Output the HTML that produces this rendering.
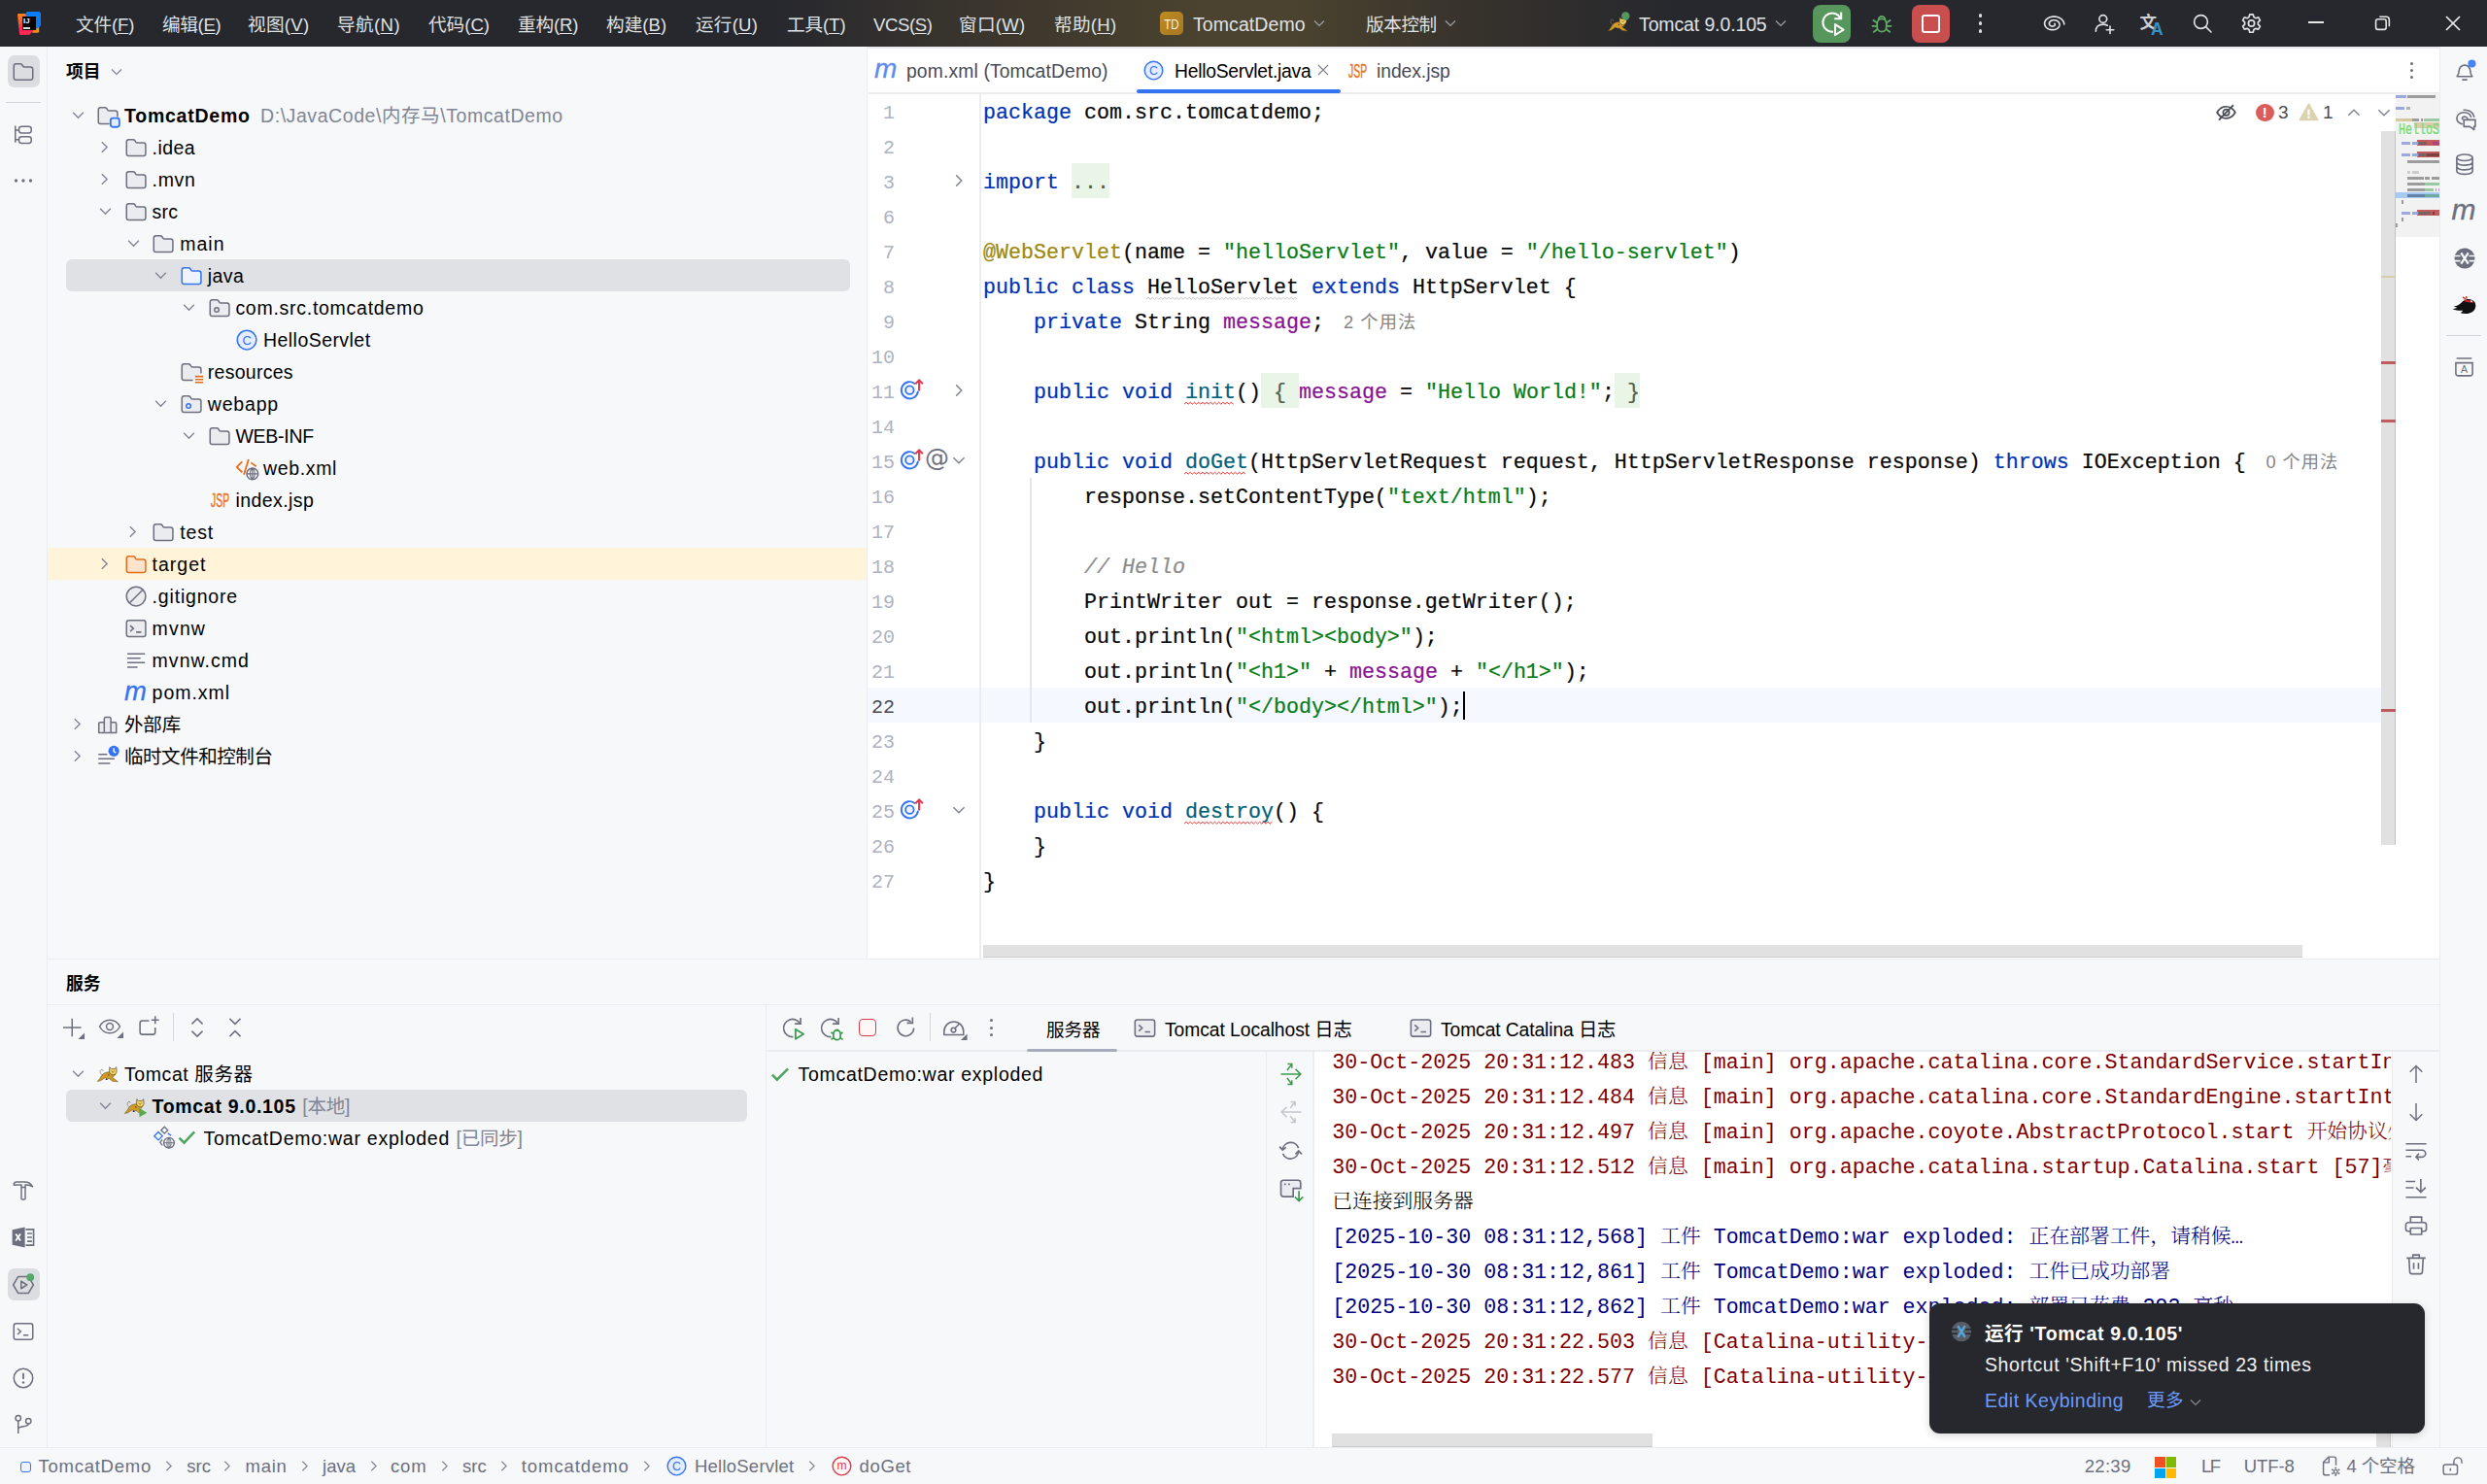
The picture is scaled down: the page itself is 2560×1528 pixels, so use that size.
<!DOCTYPE html><html lang="zh-CN"><head><meta charset="utf-8"><title>TomcatDemo – HelloServlet.java</title><style>
html,body{margin:0;padding:0}
body{width:2560px;height:1528px;overflow:hidden;position:relative;background:#F7F8FA;font-family:"Liberation Sans","Noto Sans CJK SC",sans-serif;font-size:19.5px;color:#000}
.a{position:absolute}
svg{overflow:visible}
.t{position:absolute;white-space:nowrap}
.m{position:absolute;white-space:pre;font-family:"Liberation Mono","Noto Sans CJK SC",monospace;font-size:21.667px}
.c{position:absolute;white-space:pre;font-family:"Liberation Mono","Noto Serif CJK SC",monospace;font-size:21.667px}
.cj{font-size:20.8px;font-weight:300}
.g{color:#818594}
.k{color:#0033B3}.s{color:#067D17}.f{color:#871094}.an{color:#9E880D}.cm{color:#8C8C8C;font-style:italic}.fn{color:#00627A}
.mc{-webkit-text-stroke:0.22px currentColor}
.err{}
.wk{}
.hint{font-family:"Liberation Sans","Noto Sans CJK SC",sans-serif;font-size:18.300px;color:#858585}
u{text-underline-offset:2px}
</style></head><body>
<div class="a" style="left:0px;top:0px;width:2560px;height:48px;background:#27282E;background:linear-gradient(90deg,#27282E 0px,#27282E 800px,#3a352d 1000px,#4b432f 1240px,#4b432f 1330px,#36322c 1520px,#27282E 1720px,#27282E 2560px);"></div>
<div class="a" style="left:0px;top:48px;width:48px;height:1442px;background:#F7F8FA;border-right:1px solid #EBECF0;"></div>
<div class="a" style="left:2511px;top:48px;width:49px;height:1442px;background:#F7F8FA;border-left:1px solid #EBECF0;box-sizing:border-box;"></div>
<div class="a" style="left:49px;top:48px;width:844px;height:939px;background:#F7F8FA;"></div>
<div class="a" style="left:892px;top:48px;width:2px;height:939px;background:#ECEDF1;"></div>
<div class="a" style="left:893px;top:48px;width:1618px;height:939px;background:#FFFFFF;"></div>
<div class="a" style="left:894px;top:95.4px;width:1617px;height:1.6px;background:#EBECF0;"></div>
<div class="a" style="left:49px;top:987px;width:2462px;height:1px;background:#EBECF0;"></div>
<div class="a" style="left:49px;top:1034px;width:2462px;height:1px;background:#EBECF0;"></div>
<div class="a" style="left:0px;top:1490px;width:2560px;height:1px;background:#EBECF0;"></div>
<div class="a" style="left:17px;top:11px;width:27px;height:27px;background:linear-gradient(172deg,#FF8A15 8%,#FD5A34 40%,#FE2857 62%,#FE2857 100%);clip-path:polygon(1.0px 4.0px,1.8px 3.1px,9.0px 3.0px,20.0px 17.0px,13.5px 24.8px,4.0px 25.0px,3.0px 24.2px);"></div>
<div class="a" style="left:17px;top:11px;width:27px;height:27px;background:#FF8A15;clip-path:polygon(16.0px 22.7px,22.3px 22.7px,23.2px 21.8px,23.2px 16.0px,19.0px 16.0px);"></div>
<div class="a" style="left:17px;top:11px;width:27px;height:27px;background:linear-gradient(200deg,#087CFA 55%,#4A6FE0 100%);clip-path:polygon(9.6px 2.6px,11.2px 1.0px,23.4px 1.0px,25.0px 2.6px,25.0px 15.3px,20.4px 18.9px,9.6px 18.9px);"></div>
<div class="a" style="left:23px;top:17px;width:14px;height:14px;background:#000;"></div>
<div class="t" style="left:24px;top:16.5px;height:10px;line-height:10px;color:#fff;font-size:7.800px;font-weight:bold;letter-spacing:0.200px;">IJ</div>
<div class="a" style="left:24px;top:28.3px;width:6.5px;height:1.6px;background:#DADADA;"></div>
<div class="t" style="left:78px;top:6.0px;height:40px;line-height:40px;color:#DFE1E5;font-size:18.6px;letter-spacing:-0.111px;">文件(<u>F</u>)</div>
<div class="t" style="left:167px;top:6.0px;height:40px;line-height:40px;color:#DFE1E5;font-size:18.6px;letter-spacing:-0.320px;">编辑(<u>E</u>)</div>
<div class="t" style="left:255px;top:6.0px;height:40px;line-height:40px;color:#DFE1E5;font-size:18.6px;letter-spacing:0.300px;">视图(<u>V</u>)</div>
<div class="t" style="left:347px;top:6.0px;height:40px;line-height:40px;color:#DFE1E5;font-size:18.6px;letter-spacing:0.394px;">导航(<u>N</u>)</div>
<div class="t" style="left:441px;top:6.0px;height:40px;line-height:40px;color:#DFE1E5;font-size:18.6px;letter-spacing:-0.006px;">代码(<u>C</u>)</div>
<div class="t" style="left:533px;top:6.0px;height:40px;line-height:40px;color:#DFE1E5;font-size:18.6px;letter-spacing:-0.126px;">重构(<u>R</u>)</div>
<div class="t" style="left:624px;top:6.0px;height:40px;line-height:40px;color:#DFE1E5;font-size:18.6px;letter-spacing:0.040px;">构建(<u>B</u>)</div>
<div class="t" style="left:716px;top:6.0px;height:40px;line-height:40px;color:#DFE1E5;font-size:18.6px;letter-spacing:0.234px;">运行(<u>U</u>)</div>
<div class="t" style="left:810px;top:6.0px;height:40px;line-height:40px;color:#DFE1E5;font-size:18.6px;letter-spacing:-0.071px;">工具(<u>T</u>)</div>
<div class="t" style="left:899px;top:6.0px;height:40px;line-height:40px;color:#DFE1E5;font-size:18.6px;letter-spacing:-0.441px;">VCS(<u>S</u>)</div>
<div class="t" style="left:987px;top:6.0px;height:40px;line-height:40px;color:#DFE1E5;font-size:18.6px;letter-spacing:0.289px;">窗口(<u>W</u>)</div>
<div class="t" style="left:1085px;top:6.0px;height:40px;line-height:40px;color:#DFE1E5;font-size:18.6px;letter-spacing:0.294px;">帮助(<u>H</u>)</div>
<div class="a" style="left:1194px;top:12px;width:24px;height:24px;background:#B8862B;border-radius:5px;background:linear-gradient(135deg,#C08A22,#A87822);"></div>
<div class="t" style="left:1194px;top:4.5px;height:40px;line-height:40px;width:24px;text-align:center;color:#FBF1DC;font-size:14px;transform:scaleX(0.82);">TD</div>
<div class="t" style="left:1228px;top:4.5px;height:40px;line-height:40px;color:#DFE1E5;letter-spacing:0.083px;">TomcatDemo</div>
<svg class="a" style="left:1350px;top:16px" width="16" height="16" viewBox="0 0 16 16" fill="none" ><path d="M3 5.5L8 10.5 13 5.5" stroke="#9DA0A8" stroke-width="1.2"/></svg>
<div class="t" style="left:1406px;top:6.0px;height:40px;line-height:40px;color:#DFE1E5;font-size:18.6px;letter-spacing:-0.398px;">版本控制</div>
<svg class="a" style="left:1485px;top:16px" width="16" height="16" viewBox="0 0 16 16" fill="none" ><path d="M3 5.5L8 10.5 13 5.5" stroke="#9DA0A8" stroke-width="1.2"/></svg>
<svg class="a" style="left:1654.5px;top:16.5px" width="21" height="16.0" viewBox="0 0 21 16" fill="none" ><path d="M4.600 8.200C2.600 7 2.200 3.600 4.400 3.200c1.300-.200 1.700 1.100.900 1.600" stroke="#777" stroke-width="0.700" fill="none"/><path d="M0.300 14.700c1.600-1.400 2.700-3.300 3.900-5.300C5.600 7 8.600 5.300 12 5.600l6 1.200c-.200 1.900-1.500 3.300-3.200 4l5.600 4.200-5.300-.400-3.400-2.700c-1.300.600-2.900.300-3.900-.700-1.500.700-2.700 2-4.500 3z" fill="#D09A2B" stroke="#5E4A17" stroke-width="0.500" stroke-linejoin="round"/><path d="M12.200 0.700l1.700 1.700h3.200l1.800-1.700.300 4.300c-.100 2.300-2.100 3.400-3.700 3.400s-3.400-1.100-3.500-3.400z" fill="#F2D264" stroke="#4A3D17" stroke-width="0.600" stroke-linejoin="round"/><path d="M14.300 4.300l1.200 1.800 1.200-1.800" stroke="#4A3D17" stroke-width="0.500" fill="none"/><path d="M8.800 11.600l1.800 1.500-2.400.300zM10.800 7.700l1.400.800-1.200.700z" fill="#1E1E1E"/><circle cx="18.300" cy="-0.500" r="4.200" fill="#57965C"/></svg>
<div class="t" style="left:1687px;top:4.5px;height:40px;line-height:40px;color:#DFE1E5;letter-spacing:-0.125px;">Tomcat 9.0.105</div>
<svg class="a" style="left:1825px;top:16px" width="16" height="16" viewBox="0 0 16 16" fill="none" ><path d="M3 5.5L8 10.5 13 5.5" stroke="#9DA0A8" stroke-width="1.2"/></svg>
<div class="a" style="left:1866px;top:5px;width:39px;height:39px;background:#57965C;border-radius:8px;"></div>
<svg class="a" style="left:1870.5px;top:8.5px" width="30" height="30" viewBox="0 0 16 16" fill="none" ><path d="M8.5 12.6A5.1 5.1 0 1 1 12.4 5" stroke="#fff" stroke-width="1.1"/><path d="M12.9 1.8v3.7H9.2" stroke="#fff" stroke-width="1.1"/><path d="M9.6 8.6l4.6 2.9-4.6 2.9z" stroke="#fff" stroke-width="1.1" stroke-linejoin="round"/></svg>
<svg class="a" style="left:1924.5px;top:12px" width="24" height="24" viewBox="0 0 24 24" fill="none" ><path d="M7.200 12.200a4.800 4.800 0 0 1 9.600 0v3.600a4.800 4.800 0 0 1-9.600 0z" stroke="#5FAD65" stroke-width="1.800"/><path d="M8.600 8.200a3.400 3.400 0 0 1 6.800 0" stroke="#5FAD65" stroke-width="1.800"/><path d="M7.200 11.600L2.800 8.600M16.800 11.600l4.400-3M7.200 14.800H1.800M16.800 14.800h5.400M7.600 18L3.200 21.200M16.400 18l4.400 3.200" stroke="#5FAD65" stroke-width="1.800"/></svg>
<div class="a" style="left:1968px;top:5px;width:39px;height:39px;background:#C94F4F;border-radius:8px;"></div>
<div class="a" style="left:1978px;top:15px;width:19px;height:19px;border:2px solid #fff;border-radius:3px;box-sizing:border-box;"></div>
<div class="a" style="left:2036.5px;top:14.2px;width:3.6px;height:3.6px;background:#DFE1E5;border-radius:50%;"></div>
<div class="a" style="left:2036.5px;top:22.2px;width:3.6px;height:3.6px;background:#DFE1E5;border-radius:50%;"></div>
<div class="a" style="left:2036.5px;top:30.2px;width:3.6px;height:3.6px;background:#DFE1E5;border-radius:50%;"></div>
<svg class="a" style="left:2101.5px;top:12.5px" width="23" height="23" viewBox="0 0 16 16" fill="none" ><path d="M8.96 7.97 L9.03 8.03 L9.10 8.10 L9.15 8.18 L9.20 8.26 L9.24 8.35 L9.26 8.45 L9.27 8.55 L9.27 8.65 L9.25 8.76 L9.22 8.87 L9.17 8.98 L9.11 9.08 L9.03 9.18 L8.93 9.28 L8.82 9.38 L8.69 9.47 L8.55 9.55 L8.40 9.62 L8.24 9.67 L8.06 9.72 L7.88 9.76 L7.68 9.78 L7.48 9.79 L7.28 9.78 L7.07 9.76 L6.87 9.72 L6.66 9.66 L6.46 9.59 L6.27 9.50 L6.08 9.40 L5.90 9.28 L5.74 9.14 L5.59 8.99 L5.46 8.83 L5.35 8.66 L5.26 8.47 L5.19 8.28 L5.14 8.08 L5.12 7.87 L5.12 7.66 L5.15 7.45 L5.21 7.24 L5.30 7.03 L5.41 6.82 L5.55 6.62 L5.71 6.42 L5.90 6.24 L6.12 6.07 L6.36 5.91 L6.62 5.77 L6.90 5.65 L7.20 5.55 L7.51 5.47 L7.84 5.41 L8.18 5.37 L8.52 5.36 L8.87 5.37 L9.22 5.41 L9.57 5.47 L9.91 5.56 L10.25 5.67 L10.57 5.81 L10.88 5.98 L11.17 6.17 L11.44 6.38 L11.69 6.61 L11.91 6.86 L12.10 7.13 L12.26 7.42 L12.38 7.72 L12.47 8.03 L12.52 8.34 L12.53 8.67 L12.50 8.99 L12.44 9.32 L12.33 9.64 L12.18 9.96 L11.99 10.27 L11.77 10.56 L11.50 10.84 L11.20 11.11 L10.87 11.35 L10.50 11.58 L10.11 11.77 L9.69 11.94 L9.25 12.08 L8.78 12.19 L8.31 12.26 L7.82 12.31 L7.32 12.31 L6.82 12.28 L6.32 12.22 L5.83 12.12 L5.35 11.98 L4.88 11.81 L4.43 11.60 L4.00 11.36 L3.60 11.09 L3.24 10.79 L2.90 10.46 L2.61 10.11 L2.36 9.73 L2.15 9.34 L1.99 8.93 L1.88 8.50 L1.82 8.07 L1.81 7.63 L1.86 7.19 L1.96 6.75 L2.12 6.31 L2.32 5.89 L2.58 5.48 L2.89 5.08 L3.25 4.71 L3.66 4.36 L4.11 4.04 L4.60 3.75 L5.12 3.50 L5.68 3.28 L6.27 3.10 L6.88 2.96 L7.51 2.87 L8.15 2.82 L8.80 2.81 L9.45 2.86 L10.09 2.95 L10.73 3.08 L11.36 3.26 L11.96 3.49 L12.54 3.76 L13.08 4.07 L13.59 4.42 L14.06 4.81 L14.48 5.23 L14.85 5.68 L15.17 6.17 L15.43 6.67 L15.63 7.20 L15.77 7.73 L15.84 8.29" stroke="#DFE1E5" stroke-width="1.150" stroke-linecap="round" stroke-linejoin="round"/></svg>
<svg class="a" style="left:2154px;top:12px" width="24" height="24" viewBox="0 0 16 16" fill="none" ><circle cx="7.2" cy="5" r="2.6" stroke="#DFE1E5" stroke-width="1.1"/><path d="M2.200 13.500c0-3 2-4.800 5-4.800 1.200 0 2.200.3 3 .8M12 10v5M9.500 12.500h5" stroke="#DFE1E5" stroke-width="1.1" stroke-linecap="round"/></svg>
<div class="t" style="left:2202px;top:11px;width:26px;height:26px;"><span style="position:absolute;left:0.5px;top:0.5px;font-size:17.5px;line-height:22px;color:#CED0D6;font-weight:bold;">文</span><span style="position:absolute;left:12px;top:8px;font-size:17.5px;line-height:22px;color:#3592C4;font-weight:bold;">A</span></div>
<svg class="a" style="left:2255px;top:12px" width="24" height="24" viewBox="0 0 16 16" fill="none" ><circle cx="7" cy="7" r="4.600" stroke="#DFE1E5" stroke-width="1.1"/><path d="M10.400 10.400L14 14" stroke="#DFE1E5" stroke-width="1.1" stroke-linecap="round"/></svg>
<svg class="a" style="left:2305px;top:12px" width="25" height="25" viewBox="0 0 16 16" fill="none" ><path d="M6.900 1.800h2.200l.5 1.800 1.200.7 1.800-.5 1.100 1.900-1.300 1.300v1.400l1.300 1.300-1.100 1.900-1.800-.5-1.200.7-.5 1.800H6.900l-.5-1.800-1.200-.7-1.800.5-1.100-1.900 1.300-1.300V7l-1.300-1.300 1.100-1.900 1.800.5 1.200-.7z" stroke="#DFE1E5" stroke-width="1.1" stroke-linejoin="round"/><circle cx="8" cy="7.700" r="2" stroke="#DFE1E5" stroke-width="1.1"/></svg>
<div class="a" style="left:2376px;top:22.2px;width:15.5px;height:2px;background:#E6E6E6;"></div>
<svg class="a" style="left:2444px;top:15px" width="18" height="18" viewBox="0 0 17 17" fill="none" ><rect x="1.500" y="4.500" width="10" height="10" rx="2" stroke="#E6E6E6" stroke-width="1.500"/><path d="M5 2.200h6.500a3 3 0 0 1 3 3V11.500" stroke="#E6E6E6" stroke-width="1.500"/></svg>
<svg class="a" style="left:2516px;top:15px" width="18" height="18" viewBox="0 0 18 18" fill="none" ><path d="M2 2l14 14M16 2L2 16" stroke="#F0F0F0" stroke-width="1.600"/></svg>
<div class="a" style="left:8px;top:57px;width:33px;height:33px;background:#DCDDE1;border-radius:7px;"></div>
<svg class="a" style="left:12px;top:62px" width="24" height="24" viewBox="0 0 16 16" fill="none" ><path d="M1.5 4C1.5 3.17 2.17 2.5 3 2.5H5.93C6.43 2.5 6.9 2.75 7.18 3.17L7.85 4.17C8.03 4.45 8.34 4.62 8.68 4.62H13C13.83 4.62 14.5 5.29 14.5 6.12V12C14.5 12.83 13.83 13.5 13 13.5H3C2.17 13.5 1.5 12.83 1.5 12V4Z" stroke="#6C707E" stroke-width="1"/></svg>
<div class="a" style="left:6px;top:105px;width:36px;height:1px;background:#D3D5DB;"></div>
<svg class="a" style="left:12px;top:125.5px" width="24" height="25" viewBox="0 0 16 16" fill="none" ><path d="M2.500 2v11.500M2.500 5h2.500M2.500 11.500h2.500" stroke="#6C707E"/><rect x="5" y="2.500" width="8.500" height="4.500" rx="1.800" stroke="#6C707E"/><rect x="5" y="9.500" width="8.500" height="4.500" rx="1.800" stroke="#6C707E"/></svg>
<svg class="a" style="left:12px;top:174px" width="24" height="24" viewBox="0 0 16 16" fill="none" ><circle cx="3" cy="8" r="1.100" fill="#6C707E"/><circle cx="7.950" cy="8" r="1.100" fill="#6C707E"/><circle cx="13" cy="8" r="1.100" fill="#6C707E"/></svg>
<svg class="a" style="left:12px;top:1214px" width="24" height="24" viewBox="0 0 24 24" fill="none" ><path d="M2.200 5.800C2.200 4 3.400 3 5.200 3h8c3.800 0 6.800 1.800 8.300 4.800-1.900-1.300-3.900-1.800-6.300-1.800H14v2.400h-4V6H5.200C3.400 6 2.200 6.800 2.200 5.800z" stroke="#6C707E" stroke-width="1.500" stroke-linejoin="round"/><path d="M10 8.400V20a1 1 0 0 0 1 1h2a1 1 0 0 0 1-1V8.400" stroke="#6C707E" stroke-width="1.500"/></svg>
<svg class="a" style="left:11px;top:1261px" width="26" height="26" viewBox="0 0 16 16" fill="none" ><path d="M1 3.200L9 1.500v13L1 12.800z" fill="#6C707E"/><path d="M3.200 5.800l3 4.400M6.200 5.800l-3 4.400" stroke="#fff" stroke-width="1.100"/><path d="M9.500 3h5v10h-5" stroke="#6C707E"/><path d="M10.500 5.500h3M10.500 8h3M10.500 10.500h3" stroke="#6C707E"/></svg>
<div class="a" style="left:8px;top:1306px;width:33px;height:33px;background:#DCDDE1;border-radius:7px;"></div>
<svg class="a" style="left:12px;top:1311px" width="24" height="24" viewBox="0 0 16 16" fill="none" ><path d="M4.500 2.300h7l3.400 5.700-3.400 5.700h-7L1.100 8z" stroke="#6C707E" stroke-linejoin="round"/><path d="M6.500 5.500l4 2.500-4 2.500z" stroke="#6C707E" stroke-linejoin="round"/><circle cx="12.800" cy="2.800" r="2.600" fill="#55A76A"/></svg>
<svg class="a" style="left:12px;top:1359px" width="24" height="24" viewBox="0 0 16 16" fill="none" ><rect x="1.500" y="2.500" width="13" height="11" rx="1.500" stroke="#6C707E"/><path d="M4 6l2.200 2L4 10M8 10.500h3.500" stroke="#6C707E"/></svg>
<svg class="a" style="left:12px;top:1407px" width="24" height="24" viewBox="0 0 16 16" fill="none" ><circle cx="8" cy="8" r="6.500" stroke="#6C707E"/><path d="M8 4.500v4.200" stroke="#6C707E" stroke-width="1.200"/><circle cx="8" cy="11" r="0.800" fill="#6C707E"/></svg>
<svg class="a" style="left:12px;top:1455px" width="24" height="24" viewBox="0 0 16 16" fill="none" ><circle cx="4.500" cy="3.500" r="1.800" stroke="#6C707E"/><circle cx="11.500" cy="5.500" r="1.800" stroke="#6C707E"/><path d="M4.500 5.300V14M4.500 11c0-2.500 7-1 7-3.700" stroke="#6C707E"/></svg>
<div class="t" style="left:68px;top:53.5px;height:40px;line-height:40px;font-weight:bold;font-size:17.8px;">项目</div>
<svg class="a" style="left:112px;top:66px" width="16" height="16" viewBox="0 0 16 16" fill="none" ><path d="M3 5.500L8 10.500 13 5.500" stroke="#818594" stroke-width="1.200"/></svg>
<div class="a" style="left:68px;top:267px;width:807px;height:33px;background:#DFE1E5;border-radius:6px;"></div>
<div class="a" style="left:49px;top:564px;width:843px;height:33px;background:#FFF4DA;"></div>
<svg class="a" style="left:70.5px;top:109.0px" width="19" height="19" viewBox="0 0 16 16" fill="none" ><path d="M3.5 5.75L8 10.25 12.5 5.75" stroke="#818594" stroke-width="1.15"/></svg>
<svg class="a" style="left:99.2px;top:106.5px" width="24.2" height="24.2" viewBox="0 0 16 16" fill="none" ><path d="M9 13.5H3C2.17 13.5 1.5 12.83 1.5 12V4C1.5 3.17 2.17 2.5 3 2.5H5.93C6.43 2.5 6.9 2.75 7.18 3.17L7.85 4.17C8.03 4.45 8.34 4.62 8.68 4.62H13C13.83 4.62 14.5 5.29 14.5 6.12V9" fill="#EBECF0" stroke="#6C707E"/><rect x="9.800" y="9.700" width="6" height="6" rx="1.600" fill="#E4ECFF" stroke="#3574F0" stroke-width="1.200"/></svg>
<div class="t" style="left:128.0px;top:99.0px;height:40px;line-height:40px;letter-spacing:0.762px;"><b>TomcatDemo</b></div>
<div class="t" style="left:268px;top:99.0px;height:40px;line-height:40px;color:#818594;letter-spacing:0.568px;">D:\JavaCode\内存马\TomcatDemo</div>
<svg class="a" style="left:98.1px;top:142.0px" width="19" height="19" viewBox="0 0 16 16" fill="none" ><path d="M5.75 3.5L10.25 8 5.75 12.5" stroke="#818594" stroke-width="1.15"/></svg>
<svg class="a" style="left:127.8px;top:139.5px" width="24.2" height="24.2" viewBox="0 0 16 16" fill="none" ><path d="M1.5 4C1.5 3.17 2.17 2.5 3 2.5H5.93C6.43 2.5 6.9 2.75 7.18 3.17L7.85 4.17C8.03 4.45 8.34 4.62 8.68 4.62H13C13.83 4.62 14.5 5.29 14.5 6.12V12C14.5 12.83 13.83 13.5 13 13.5H3C2.17 13.5 1.5 12.83 1.5 12V4Z" fill="#EBECF0" stroke="#6C707E"/></svg>
<div class="t" style="left:156.6px;top:132.0px;height:40px;line-height:40px;letter-spacing:0.401px;">.idea</div>
<svg class="a" style="left:98.1px;top:175.0px" width="19" height="19" viewBox="0 0 16 16" fill="none" ><path d="M5.75 3.5L10.25 8 5.75 12.5" stroke="#818594" stroke-width="1.15"/></svg>
<svg class="a" style="left:127.8px;top:172.5px" width="24.2" height="24.2" viewBox="0 0 16 16" fill="none" ><path d="M1.5 4C1.5 3.17 2.17 2.5 3 2.5H5.93C6.43 2.5 6.9 2.75 7.18 3.17L7.85 4.17C8.03 4.45 8.34 4.62 8.68 4.62H13C13.83 4.62 14.5 5.29 14.5 6.12V12C14.5 12.83 13.83 13.5 13 13.5H3C2.17 13.5 1.5 12.83 1.5 12V4Z" fill="#EBECF0" stroke="#6C707E"/></svg>
<div class="t" style="left:156.6px;top:165.0px;height:40px;line-height:40px;letter-spacing:0.684px;">.mvn</div>
<svg class="a" style="left:99.1px;top:208.0px" width="19" height="19" viewBox="0 0 16 16" fill="none" ><path d="M3.5 5.75L8 10.25 12.5 5.75" stroke="#818594" stroke-width="1.15"/></svg>
<svg class="a" style="left:127.8px;top:205.5px" width="24.2" height="24.2" viewBox="0 0 16 16" fill="none" ><path d="M1.5 4C1.5 3.17 2.17 2.5 3 2.5H5.93C6.43 2.5 6.9 2.75 7.18 3.17L7.85 4.17C8.03 4.45 8.34 4.62 8.68 4.62H13C13.83 4.62 14.5 5.29 14.5 6.12V12C14.5 12.83 13.83 13.5 13 13.5H3C2.17 13.5 1.5 12.83 1.5 12V4Z" fill="#EBECF0" stroke="#6C707E"/></svg>
<div class="t" style="left:156.6px;top:198.0px;height:40px;line-height:40px;letter-spacing:0.167px;">src</div>
<svg class="a" style="left:127.69999999999999px;top:241.0px" width="19" height="19" viewBox="0 0 16 16" fill="none" ><path d="M3.5 5.75L8 10.25 12.5 5.75" stroke="#818594" stroke-width="1.15"/></svg>
<svg class="a" style="left:156.39999999999998px;top:238.5px" width="24.2" height="24.2" viewBox="0 0 16 16" fill="none" ><path d="M1.5 4C1.5 3.17 2.17 2.5 3 2.5H5.93C6.43 2.5 6.9 2.75 7.18 3.17L7.85 4.17C8.03 4.45 8.34 4.62 8.68 4.62H13C13.83 4.62 14.5 5.29 14.5 6.12V12C14.5 12.83 13.83 13.5 13 13.5H3C2.17 13.5 1.5 12.83 1.5 12V4Z" fill="#EBECF0" stroke="#6C707E"/></svg>
<div class="t" style="left:185.2px;top:231.0px;height:40px;line-height:40px;letter-spacing:1.030px;">main</div>
<svg class="a" style="left:156.3px;top:274.0px" width="19" height="19" viewBox="0 0 16 16" fill="none" ><path d="M3.5 5.75L8 10.25 12.5 5.75" stroke="#818594" stroke-width="1.15"/></svg>
<svg class="a" style="left:185.0px;top:271.5px" width="24.2" height="24.2" viewBox="0 0 16 16" fill="none" ><path d="M1.5 4C1.5 3.17 2.17 2.5 3 2.5H5.93C6.43 2.5 6.9 2.75 7.18 3.17L7.85 4.17C8.03 4.45 8.34 4.62 8.68 4.62H13C13.83 4.62 14.5 5.29 14.5 6.12V12C14.5 12.83 13.83 13.5 13 13.5H3C2.17 13.5 1.5 12.83 1.5 12V4Z" fill="#EDF3FF" stroke="#3574F0"/></svg>
<div class="t" style="left:213.8px;top:264.0px;height:40px;line-height:40px;letter-spacing:0.405px;">java</div>
<svg class="a" style="left:184.9px;top:307.0px" width="19" height="19" viewBox="0 0 16 16" fill="none" ><path d="M3.5 5.75L8 10.25 12.5 5.75" stroke="#818594" stroke-width="1.15"/></svg>
<svg class="a" style="left:213.6px;top:304.5px" width="24.2" height="24.2" viewBox="0 0 16 16" fill="none" ><path d="M1.5 4C1.5 3.17 2.17 2.5 3 2.5H5.93C6.43 2.5 6.9 2.75 7.18 3.17L7.85 4.17C8.03 4.45 8.34 4.62 8.68 4.62H13C13.83 4.62 14.5 5.29 14.5 6.12V12C14.5 12.83 13.83 13.5 13 13.5H3C2.17 13.5 1.5 12.83 1.5 12V4Z" fill="#EBECF0" stroke="#6C707E"/><circle cx="6" cy="9.3" r="1.5" stroke="#6C707E"/></svg>
<div class="t" style="left:242.4px;top:297.0px;height:40px;line-height:40px;letter-spacing:0.730px;">com.src.tomcatdemo</div>
<svg class="a" style="left:242.2px;top:337.5px" width="24.2" height="24.2" viewBox="0 0 16 16" fill="none" ><circle cx="8" cy="8" r="6.5" fill="#E4ECFF" stroke="#3574F0"/><text x="8" y="11.05" font-size="8.6" text-anchor="middle" fill="#3574F0" font-family="Liberation Sans,sans-serif">C</text></svg>
<div class="t" style="left:271.0px;top:330.0px;height:40px;line-height:40px;letter-spacing:0.447px;">HelloServlet</div>
<svg class="a" style="left:185.0px;top:370.5px" width="24.2" height="24.2" viewBox="0 0 16 16" fill="none" ><path d="M9 13.5H3C2.17 13.5 1.5 12.83 1.5 12V4C1.5 3.17 2.17 2.5 3 2.5H5.93C6.43 2.5 6.9 2.75 7.18 3.17L7.85 4.17C8.03 4.45 8.34 4.62 8.68 4.62H13C13.83 4.62 14.5 5.29 14.5 6.12V9" fill="#EBECF0" stroke="#6C707E"/><path d="M10.5 11h5.5M10.5 13h5.5M10.5 15h5.5" stroke="#E66D17" stroke-width="1"/></svg>
<div class="t" style="left:213.8px;top:363.0px;height:40px;line-height:40px;letter-spacing:0.275px;">resources</div>
<svg class="a" style="left:156.3px;top:406.0px" width="19" height="19" viewBox="0 0 16 16" fill="none" ><path d="M3.5 5.75L8 10.25 12.5 5.75" stroke="#818594" stroke-width="1.15"/></svg>
<svg class="a" style="left:185.0px;top:403.5px" width="24.2" height="24.2" viewBox="0 0 16 16" fill="none" ><path d="M1.5 4C1.5 3.17 2.17 2.5 3 2.5H5.93C6.43 2.5 6.9 2.75 7.18 3.17L7.85 4.17C8.03 4.45 8.34 4.62 8.68 4.62H13C13.83 4.62 14.5 5.29 14.5 6.12V12C14.5 12.83 13.83 13.5 13 13.5H3C2.17 13.5 1.5 12.83 1.5 12V4Z" fill="#EBECF0" stroke="#6C707E"/><circle cx="6" cy="9.3" r="1.5" stroke="#3574F0"/></svg>
<div class="t" style="left:213.8px;top:396.0px;height:40px;line-height:40px;letter-spacing:0.815px;">webapp</div>
<svg class="a" style="left:184.9px;top:439.0px" width="19" height="19" viewBox="0 0 16 16" fill="none" ><path d="M3.5 5.75L8 10.25 12.5 5.75" stroke="#818594" stroke-width="1.15"/></svg>
<svg class="a" style="left:213.6px;top:436.5px" width="24.2" height="24.2" viewBox="0 0 16 16" fill="none" ><path d="M1.5 4C1.5 3.17 2.17 2.5 3 2.5H5.93C6.43 2.5 6.9 2.75 7.18 3.17L7.85 4.17C8.03 4.45 8.34 4.62 8.68 4.62H13C13.83 4.62 14.5 5.29 14.5 6.12V12C14.5 12.83 13.83 13.5 13 13.5H3C2.17 13.5 1.5 12.83 1.5 12V4Z" fill="#EBECF0" stroke="#6C707E"/></svg>
<div class="t" style="left:242.4px;top:429.0px;height:40px;line-height:40px;letter-spacing:-0.261px;">WEB-INF</div>
<svg class="a" style="left:242.2px;top:469.5px" width="24.2" height="24.2" viewBox="0 0 16 16" fill="none" ><path d="M4.8 3.6L1.2 7.2 4.8 10.8" stroke="#E66D17" stroke-width="1.2"/><path d="M9.2 2L6 12.4" stroke="#E66D17" stroke-width="1.2"/><path d="M10.800 4.200l3.600 2.600" stroke="#E66D17" stroke-width="1.100"/><circle cx="11.8" cy="11.8" r="3.9" fill="#F7F8FA" stroke="#6C707E" stroke-width="1"/><path d="M7.9 11.8h7.8M11.8 7.9v7.8M11.8 7.9c-2.2 1.8-2.2 6 0 7.8M11.8 7.9c2.2 1.8 2.2 6 0 7.8" stroke="#6C707E" stroke-width="0.8"/></svg>
<div class="t" style="left:271.0px;top:462.0px;height:40px;line-height:40px;letter-spacing:0.653px;">web.xml</div>
<div class="t" style="left:216.9px;top:495.0px;height:40px;line-height:40px;color:#E8762B;font-size:20px;transform:scaleX(0.52);transform-origin:0 50%;-webkit-text-stroke:0.500px #E8762B;">JSP</div>
<div class="t" style="left:242.4px;top:495.0px;height:40px;line-height:40px;letter-spacing:0.426px;">index.jsp</div>
<svg class="a" style="left:126.69999999999999px;top:538.0px" width="19" height="19" viewBox="0 0 16 16" fill="none" ><path d="M5.75 3.5L10.25 8 5.75 12.5" stroke="#818594" stroke-width="1.15"/></svg>
<svg class="a" style="left:156.39999999999998px;top:535.5px" width="24.2" height="24.2" viewBox="0 0 16 16" fill="none" ><path d="M1.5 4C1.5 3.17 2.17 2.5 3 2.5H5.93C6.43 2.5 6.9 2.75 7.18 3.17L7.85 4.17C8.03 4.45 8.34 4.62 8.68 4.62H13C13.83 4.62 14.5 5.29 14.5 6.12V12C14.5 12.83 13.83 13.5 13 13.5H3C2.17 13.5 1.5 12.83 1.5 12V4Z" fill="#EBECF0" stroke="#6C707E"/></svg>
<div class="t" style="left:185.2px;top:528.0px;height:40px;line-height:40px;letter-spacing:0.866px;">test</div>
<svg class="a" style="left:98.1px;top:571.0px" width="19" height="19" viewBox="0 0 16 16" fill="none" ><path d="M5.75 3.5L10.25 8 5.75 12.5" stroke="#818594" stroke-width="1.15"/></svg>
<svg class="a" style="left:127.8px;top:568.5px" width="24.2" height="24.2" viewBox="0 0 16 16" fill="none" ><path d="M1.5 4C1.5 3.17 2.17 2.5 3 2.5H5.93C6.43 2.5 6.9 2.75 7.18 3.17L7.85 4.17C8.03 4.45 8.34 4.62 8.68 4.62H13C13.83 4.62 14.5 5.29 14.5 6.12V12C14.5 12.83 13.83 13.5 13 13.5H3C2.17 13.5 1.5 12.83 1.5 12V4Z" fill="#FFE3CC" stroke="#E66D17"/></svg>
<div class="t" style="left:156.6px;top:561.0px;height:40px;line-height:40px;letter-spacing:1.004px;">target</div>
<svg class="a" style="left:127.8px;top:601.5px" width="24.2" height="24.2" viewBox="0 0 16 16" fill="none" ><circle cx="8" cy="8" r="6.5" fill="#EBECF0" stroke="#6C707E"/><path d="M3.6 12.4L12.4 3.6" stroke="#6C707E"/></svg>
<div class="t" style="left:156.6px;top:594.0px;height:40px;line-height:40px;letter-spacing:0.818px;">.gitignore</div>
<svg class="a" style="left:127.8px;top:634.5px" width="24.2" height="24.2" viewBox="0 0 16 16" fill="none" ><rect x="1.5" y="2.5" width="13" height="11" rx="1.5" fill="#EBECF0" stroke="#6C707E"/><path d="M4 6l2.2 2L4 10M8 10.5h3.5" stroke="#6C707E"/></svg>
<div class="t" style="left:156.6px;top:627.0px;height:40px;line-height:40px;letter-spacing:1.145px;">mvnw</div>
<svg class="a" style="left:127.8px;top:667.5px" width="24.2" height="24.2" viewBox="0 0 16 16" fill="none" ><path d="M2 3.5h12M2 6.5h9M2 9.5h12M2 12.5h7" stroke="#6C707E"/></svg>
<div class="t" style="left:156.6px;top:660.0px;height:40px;line-height:40px;letter-spacing:1.036px;">mvnw.cmd</div>
<div class="t" style="left:128.1px;top:692.0px;height:40px;line-height:40px;color:#3574F0;font-size:27.5px;font-style:italic;-webkit-text-stroke:0.3px #3574F0;">m</div>
<div class="t" style="left:156.6px;top:693.0px;height:40px;line-height:40px;letter-spacing:0.973px;">pom.xml</div>
<svg class="a" style="left:69.5px;top:736.0px" width="19" height="19" viewBox="0 0 16 16" fill="none" ><path d="M5.75 3.5L10.25 8 5.75 12.5" stroke="#818594" stroke-width="1.15"/></svg>
<svg class="a" style="left:99.2px;top:733.5px" width="24.2" height="24.2" viewBox="0 0 16 16" fill="none" ><path d="M1.800 13.500V7.300a.900 .900 0 0 1 .900-.900h2.800v7.100zM5.500 13.500V3.900a.900 .900 0 0 1 .900-.900h2.700a.900 .900 0 0 1 .900 .900v9.600zM10 13.500V6.400h2.800a.900 .900 0 0 1 .900 .900v6.200z" fill="#EBECF0" stroke="#6C707E" stroke-linejoin="round"/></svg>
<div class="t" style="left:128.0px;top:726.0px;height:40px;line-height:40px;letter-spacing:-0.172px;">外部库</div>
<svg class="a" style="left:69.5px;top:769.0px" width="19" height="19" viewBox="0 0 16 16" fill="none" ><path d="M5.75 3.5L10.25 8 5.75 12.5" stroke="#818594" stroke-width="1.15"/></svg>
<svg class="a" style="left:99.2px;top:766.5px" width="24.2" height="24.2" viewBox="0 0 16 16" fill="none" ><path d="M1.5 6.5h6M1.5 9.5h11M1.5 12.5h8" stroke="#6C707E"/><circle cx="12" cy="4.2" r="3.7" fill="#3574F0"/><path d="M12 2.2v2.2l1.4 1" stroke="#fff" stroke-width="0.9" fill="none"/></svg>
<div class="t" style="left:128.0px;top:759.0px;height:40px;line-height:40px;letter-spacing:-0.439px;">临时文件和控制台</div>
<div class="a" style="left:893px;top:48px;width:1618px;height:1.5px;background:#E9EAEE;"></div>
<div class="t" style="left:900px;top:51.0px;height:40px;line-height:40px;color:#5B8DEF;font-size:28px;font-style:italic;-webkit-text-stroke:0.3px #5B8DEF;">m</div>
<div class="t" style="left:933px;top:53.8px;height:40px;line-height:40px;color:#494B57;font-size:19.3px;letter-spacing:0.148px;">pom.xml (TomcatDemo)</div>
<svg class="a" style="left:1176px;top:61px" width="23" height="23" viewBox="0 0 16 16" fill="none" ><circle cx="8" cy="8" r="6.5" fill="#E4ECFF" stroke="#3574F0"/><text x="8" y="11.05" font-size="8.6" text-anchor="middle" fill="#3574F0" font-family="Liberation Sans,sans-serif">C</text></svg>
<div class="t" style="left:1209px;top:53.8px;height:40px;line-height:40px;font-size:19.3px;letter-spacing:-0.252px;">HelloServlet.java</div>
<svg class="a" style="left:1354px;top:64px" width="16" height="16" viewBox="0 0 16 16" fill="none" ><path d="M3 3l10 10M13 3L3 13" stroke="#818594" stroke-width="1.2"/></svg>
<div class="a" style="left:1170px;top:91.6px;width:210px;height:4.9px;background:#3574F0;border-radius:2.500px;"></div>
<div class="t" style="left:1388px;top:53.0px;height:40px;line-height:40px;color:#E8762B;font-size:20px;transform:scaleX(0.52);transform-origin:0 50%;-webkit-text-stroke:0.500px #E8762B;">JSP</div>
<div class="t" style="left:1417px;top:53.8px;height:40px;line-height:40px;color:#494B57;font-size:19.3px;letter-spacing:-0.045px;">index.jsp</div>
<div class="a" style="left:2480.5px;top:63.5px;width:3px;height:3px;background:#6C707E;border-radius:50%;"></div>
<div class="a" style="left:2480.5px;top:70.8px;width:3px;height:3px;background:#6C707E;border-radius:50%;"></div>
<div class="a" style="left:2480.5px;top:78.1px;width:3px;height:3px;background:#6C707E;border-radius:50%;"></div>
<div class="a" style="left:893px;top:708px;width:1558px;height:36px;background:#F5F8FE;"></div>
<div class="a" style="left:1008px;top:96px;width:2px;height:891px;background:#ECEDF1;"></div>
<div class="a" style="left:1060px;top:492px;width:1.5px;height:252px;background:#E4E6EB;"></div>
<div class="a" style="left:1103.0px;top:168px;width:39.0px;height:36px;background:#E9F5E6;"></div>
<div class="a" style="left:1298.0px;top:384px;width:39.0px;height:36px;background:#E9F5E6;"></div>
<div class="a" style="left:1662.0px;top:384px;width:26.0px;height:36px;background:#E9F5E6;"></div>
<div class="m" style="left:893px;width:28px;text-align:right;top:99px;height:36px;line-height:36px;color:#AEB3C2;font-size:20px;">1</div>
<div class="m mc" style="left:1012px;top:98.7px;height:36px;line-height:36px;color:#080808;"><span class="k">package</span> com.src.tomcatdemo;</div>
<div class="m" style="left:893px;width:28px;text-align:right;top:135px;height:36px;line-height:36px;color:#AEB3C2;font-size:20px;">2</div>
<div class="m" style="left:893px;width:28px;text-align:right;top:171px;height:36px;line-height:36px;color:#AEB3C2;font-size:20px;">3</div>
<div class="m mc" style="left:1012px;top:170.7px;height:36px;line-height:36px;color:#080808;"><span class="k">import</span> <span style="color:#4F5D4C">...</span></div>
<div class="m" style="left:893px;width:28px;text-align:right;top:207px;height:36px;line-height:36px;color:#AEB3C2;font-size:20px;">6</div>
<div class="m" style="left:893px;width:28px;text-align:right;top:243px;height:36px;line-height:36px;color:#AEB3C2;font-size:20px;">7</div>
<div class="m mc" style="left:1012px;top:242.7px;height:36px;line-height:36px;color:#080808;"><span class="an">@WebServlet</span>(name = <span class="s">"helloServlet"</span>, value = <span class="s">"/hello-servlet"</span>)</div>
<div class="m" style="left:893px;width:28px;text-align:right;top:279px;height:36px;line-height:36px;color:#AEB3C2;font-size:20px;">8</div>
<div class="m mc" style="left:1012px;top:278.7px;height:36px;line-height:36px;color:#080808;"><span class="k">public class</span> <span class="wk">HelloServlet</span> <span class="k">extends</span> HttpServlet {</div>
<div class="m" style="left:893px;width:28px;text-align:right;top:315px;height:36px;line-height:36px;color:#AEB3C2;font-size:20px;">9</div>
<div class="m mc" style="left:1012px;top:314.7px;height:36px;line-height:36px;color:#080808;">    <span class="k">private</span> String <span class="f">message</span>;</div>
<div class="m" style="left:893px;width:28px;text-align:right;top:351px;height:36px;line-height:36px;color:#AEB3C2;font-size:20px;">10</div>
<div class="m" style="left:893px;width:28px;text-align:right;top:387px;height:36px;line-height:36px;color:#AEB3C2;font-size:20px;">11</div>
<div class="m mc" style="left:1012px;top:386.7px;height:36px;line-height:36px;color:#080808;">    <span class="k">public void</span> <span class="fn err">init</span>() <span style="color:#4F5D4C">{</span> <span class="f">message</span> = <span class="s">"Hello World!"</span>; <span style="color:#4F5D4C">}</span></div>
<div class="m" style="left:893px;width:28px;text-align:right;top:423px;height:36px;line-height:36px;color:#AEB3C2;font-size:20px;">14</div>
<div class="m" style="left:893px;width:28px;text-align:right;top:459px;height:36px;line-height:36px;color:#AEB3C2;font-size:20px;">15</div>
<div class="m mc" style="left:1012px;top:458.7px;height:36px;line-height:36px;color:#080808;">    <span class="k">public void</span> <span class="fn err">doGet</span>(HttpServletRequest request, HttpServletResponse response) <span class="k">throws</span> IOException {</div>
<div class="m" style="left:893px;width:28px;text-align:right;top:495px;height:36px;line-height:36px;color:#AEB3C2;font-size:20px;">16</div>
<div class="m mc" style="left:1012px;top:494.7px;height:36px;line-height:36px;color:#080808;">        response.setContentType(<span class="s">"text/html"</span>);</div>
<div class="m" style="left:893px;width:28px;text-align:right;top:531px;height:36px;line-height:36px;color:#AEB3C2;font-size:20px;">17</div>
<div class="m" style="left:893px;width:28px;text-align:right;top:567px;height:36px;line-height:36px;color:#AEB3C2;font-size:20px;">18</div>
<div class="m mc" style="left:1012px;top:566.7px;height:36px;line-height:36px;color:#080808;">        <span class="cm">// Hello</span></div>
<div class="m" style="left:893px;width:28px;text-align:right;top:603px;height:36px;line-height:36px;color:#AEB3C2;font-size:20px;">19</div>
<div class="m mc" style="left:1012px;top:602.7px;height:36px;line-height:36px;color:#080808;">        PrintWriter out = response.getWriter();</div>
<div class="m" style="left:893px;width:28px;text-align:right;top:639px;height:36px;line-height:36px;color:#AEB3C2;font-size:20px;">20</div>
<div class="m mc" style="left:1012px;top:638.7px;height:36px;line-height:36px;color:#080808;">        out.println(<span class="s">"&lt;html&gt;&lt;body&gt;"</span>);</div>
<div class="m" style="left:893px;width:28px;text-align:right;top:675px;height:36px;line-height:36px;color:#AEB3C2;font-size:20px;">21</div>
<div class="m mc" style="left:1012px;top:674.7px;height:36px;line-height:36px;color:#080808;">        out.println(<span class="s">"&lt;h1&gt;"</span> + <span class="f">message</span> + <span class="s">"&lt;/h1&gt;"</span>);</div>
<div class="m" style="left:893px;width:28px;text-align:right;top:711px;height:36px;line-height:36px;color:#4A4D57;font-size:20px;">22</div>
<div class="m mc" style="left:1012px;top:710.7px;height:36px;line-height:36px;color:#080808;">        out.println(<span class="s">"&lt;/body&gt;&lt;/html&gt;"</span>);</div>
<div class="m" style="left:893px;width:28px;text-align:right;top:747px;height:36px;line-height:36px;color:#AEB3C2;font-size:20px;">23</div>
<div class="m mc" style="left:1012px;top:746.7px;height:36px;line-height:36px;color:#080808;">    }</div>
<div class="m" style="left:893px;width:28px;text-align:right;top:783px;height:36px;line-height:36px;color:#AEB3C2;font-size:20px;">24</div>
<div class="m" style="left:893px;width:28px;text-align:right;top:819px;height:36px;line-height:36px;color:#AEB3C2;font-size:20px;">25</div>
<div class="m mc" style="left:1012px;top:818.7px;height:36px;line-height:36px;color:#080808;">    <span class="k">public void</span> <span class="fn err">destroy</span>() {</div>
<div class="m" style="left:893px;width:28px;text-align:right;top:855px;height:36px;line-height:36px;color:#AEB3C2;font-size:20px;">26</div>
<div class="m mc" style="left:1012px;top:854.7px;height:36px;line-height:36px;color:#080808;">    }</div>
<div class="m" style="left:893px;width:28px;text-align:right;top:891px;height:36px;line-height:36px;color:#AEB3C2;font-size:20px;">27</div>
<div class="m mc" style="left:1012px;top:890.7px;height:36px;line-height:36px;color:#080808;">}</div>
<svg class="a" style="left:1219.0px;top:413.5px" width="54.0" height="3" viewBox="0 0 54.0 3" fill="none"><polyline points="0,2.2 2.1,0.2 4.2,2.2 6.3,0.2 8.4,2.2 10.5,0.2 12.6,2.2 14.7,0.2 16.8,2.2 18.9,0.2 21,2.2 23.1,0.2 25.2,2.2 27.3,0.2 29.4,2.2 31.5,0.2 33.6,2.2 35.7,0.2 37.8,2.2 39.9,0.2 42,2.2 44.1,0.2 46.2,2.2 48.3,0.2 50.4,2.2" stroke="#F0322F" stroke-width="1.0"/></svg>
<svg class="a" style="left:1219.0px;top:485.5px" width="67.0" height="3" viewBox="0 0 67.0 3" fill="none"><polyline points="0,2.2 2.1,0.2 4.2,2.2 6.3,0.2 8.4,2.2 10.5,0.2 12.6,2.2 14.7,0.2 16.8,2.2 18.9,0.2 21,2.2 23.1,0.2 25.2,2.2 27.3,0.2 29.4,2.2 31.5,0.2 33.6,2.2 35.7,0.2 37.8,2.2 39.9,0.2 42,2.2 44.1,0.2 46.2,2.2 48.3,0.2 50.4,2.2 52.5,0.2 54.6,2.2 56.7,0.2 58.8,2.2 60.9,0.2 63,2.2" stroke="#F0322F" stroke-width="1.0"/></svg>
<svg class="a" style="left:1219.0px;top:845.5px" width="93.0" height="3" viewBox="0 0 93.0 3" fill="none"><polyline points="0,2.2 2.1,0.2 4.2,2.2 6.3,0.2 8.4,2.2 10.5,0.2 12.6,2.2 14.7,0.2 16.8,2.2 18.9,0.2 21,2.2 23.1,0.2 25.2,2.2 27.3,0.2 29.4,2.2 31.5,0.2 33.6,2.2 35.7,0.2 37.8,2.2 39.9,0.2 42,2.2 44.1,0.2 46.2,2.2 48.3,0.2 50.4,2.2 52.5,0.2 54.6,2.2 56.7,0.2 58.8,2.2 60.9,0.2 63,2.2 65.1,0.2 67.2,2.2 69.3,0.2 71.4,2.2 73.5,0.2 75.6,2.2 77.7,0.2 79.8,2.2 81.9,0.2 84,2.2 86.1,0.2 88.2,2.2 90.3,0.2" stroke="#F0322F" stroke-width="1.0"/></svg>
<svg class="a" style="left:1180.0px;top:305.5px" width="158.0" height="3" viewBox="0 0 158.0 3" fill="none"><polyline points="0,2.2 2.1,0.2 4.2,2.2 6.3,0.2 8.4,2.2 10.5,0.2 12.6,2.2 14.7,0.2 16.8,2.2 18.9,0.2 21,2.2 23.1,0.2 25.2,2.2 27.3,0.2 29.4,2.2 31.5,0.2 33.6,2.2 35.7,0.2 37.8,2.2 39.9,0.2 42,2.2 44.1,0.2 46.2,2.2 48.3,0.2 50.4,2.2 52.5,0.2 54.6,2.2 56.7,0.2 58.8,2.2 60.9,0.2 63,2.2 65.1,0.2 67.2,2.2 69.3,0.2 71.4,2.2 73.5,0.2 75.6,2.2 77.7,0.2 79.8,2.2 81.9,0.2 84,2.2 86.1,0.2 88.2,2.2 90.3,0.2 92.4,2.2 94.5,0.2 96.6,2.2 98.7,0.2 100.8,2.2 102.9,0.2 105,2.2 107.1,0.2 109.2,2.2 111.3,0.2 113.4,2.2 115.5,0.2 117.6,2.2 119.7,0.2 121.8,2.2 123.9,0.2 126,2.2 128.1,0.2 130.2,2.2 132.3,0.2 134.4,2.2 136.5,0.2 138.6,2.2 140.7,0.2 142.8,2.2 144.9,0.2 147,2.2 149.1,0.2 151.2,2.2 153.3,0.2 155.4,2.2" stroke="#BDBDBD" stroke-width="0.9"/></svg>
<div class="hint t" style="left:1383px;top:311.5px;height:40px;line-height:40px;letter-spacing:1.061px;">2 个用法</div>
<div class="hint t" style="left:2332.5px;top:455.5px;height:40px;line-height:40px;letter-spacing:0.901px;">0 个用法</div>
<div class="a" style="left:1505.5px;top:711.5px;width:2px;height:29px;background:#000;"></div>
<svg class="a" style="left:924.5px;top:386.5px" width="26" height="26" viewBox="0 0 16 16" fill="none" ><path d="M10.600 5.200A5.300 5.300 0 1 0 12.300 9.600" stroke="#3574F0" stroke-width="1.150" fill="none"/><circle cx="7" cy="9" r="2.600" stroke="#3574F0" stroke-width="1.150" fill="#EDF3FF"/><path d="M13 9.600V2.900M10.700 5.100L13 2.700l2.300 2.400" stroke="#DB3B4B" stroke-width="1.250" fill="none"/></svg>
<svg class="a" style="left:924.5px;top:458.5px" width="26" height="26" viewBox="0 0 16 16" fill="none" ><path d="M10.600 5.200A5.300 5.300 0 1 0 12.300 9.600" stroke="#3574F0" stroke-width="1.150" fill="none"/><circle cx="7" cy="9" r="2.600" stroke="#3574F0" stroke-width="1.150" fill="#EDF3FF"/><path d="M13 9.600V2.900M10.700 5.100L13 2.700l2.300 2.400" stroke="#DB3B4B" stroke-width="1.250" fill="none"/></svg>
<svg class="a" style="left:924.5px;top:818.5px" width="26" height="26" viewBox="0 0 16 16" fill="none" ><path d="M10.600 5.200A5.300 5.300 0 1 0 12.300 9.600" stroke="#3574F0" stroke-width="1.150" fill="none"/><circle cx="7" cy="9" r="2.600" stroke="#3574F0" stroke-width="1.150" fill="#EDF3FF"/><path d="M13 9.600V2.900M10.700 5.100L13 2.700l2.300 2.400" stroke="#DB3B4B" stroke-width="1.250" fill="none"/></svg>
<div class="t" style="left:952px;top:451.5px;height:40px;line-height:40px;font-family:'DejaVu Sans',sans-serif;font-size:25px;color:#6C707E;">@</div>
<svg class="a" style="left:977px;top:176px" width="20" height="20" viewBox="0 0 16 16" fill="none" ><path d="M5.75 3.5L10.25 8 5.75 12.5" stroke="#818594" stroke-width="1.15"/></svg>
<svg class="a" style="left:977px;top:392px" width="20" height="20" viewBox="0 0 16 16" fill="none" ><path d="M5.75 3.5L10.25 8 5.75 12.5" stroke="#818594" stroke-width="1.15"/></svg>
<svg class="a" style="left:977px;top:463.5px" width="20" height="20" viewBox="0 0 16 16" fill="none" ><path d="M3.5 5.75L8 10.25 12.5 5.75" stroke="#818594" stroke-width="1.15"/></svg>
<svg class="a" style="left:977px;top:823.5px" width="20" height="20" viewBox="0 0 16 16" fill="none" ><path d="M3.5 5.75L8 10.25 12.5 5.75" stroke="#818594" stroke-width="1.15"/></svg>
<svg class="a" style="left:2280px;top:104px" width="23" height="23" viewBox="0 0 16 16" fill="none" ><path d="M1.500 8.200C3 5.500 5.300 4 8 4s5 1.500 6.500 4.200C13 10.900 10.700 12.400 8 12.400S3 10.900 1.500 8.200z" stroke="#4A4D57" stroke-width="1.200"/><circle cx="8" cy="8.200" r="2.200" stroke="#4A4D57" stroke-width="1.200"/><path d="M2.800 13.600L13.200 2.800" stroke="#4A4D57" stroke-width="1.300"/></svg>
<div class="a" style="left:2322px;top:106.5px;width:18.5px;height:18.5px;background:#DB5C5C;border-radius:50%;"></div>
<div class="t" style="left:2322px;top:95.5px;height:40px;line-height:40px;width:18.5px;text-align:center;color:#fff;font-weight:bold;font-size:15px;">!</div>
<div class="t" style="left:2345px;top:96.0px;height:40px;line-height:40px;color:#494B57;font-size:19px;">3</div>
<svg class="a" style="left:2366px;top:105px" width="21" height="21" viewBox="0 0 16 16" fill="none" ><path d="M8 1.600L15 14H1z" fill="#DDD2B0" stroke="#DDD2B0" stroke-width="1.200" stroke-linejoin="round"/><path d="M8 5.800v4.400" stroke="#fff" stroke-width="1.700"/><circle cx="8" cy="12" r="0.950" fill="#fff"/></svg>
<div class="t" style="left:2391px;top:96.0px;height:40px;line-height:40px;color:#494B57;font-size:19px;">1</div>
<svg class="a" style="left:2413px;top:106px" width="20" height="20" viewBox="0 0 16 16" fill="none" ><path d="M3.5 10.25L8 5.75 12.5 10.25" stroke="#818594" stroke-width="1.15"/></svg>
<svg class="a" style="left:2444px;top:106px" width="20" height="20" viewBox="0 0 16 16" fill="none" ><path d="M3.5 5.75L8 10.25 12.5 5.75" stroke="#818594" stroke-width="1.15"/></svg>
<div class="a" style="left:2451px;top:135px;width:15px;height:735px;background:#E1E1E1;border-right:1.500px solid #C4C4C4;box-sizing:border-box;"></div>
<div class="a" style="left:2451px;top:283.5px;width:15px;height:2.5px;background:#D6CDA9;"></div>
<div class="a" style="left:2451px;top:372px;width:15px;height:2.5px;background:#C25B5B;"></div>
<div class="a" style="left:2451px;top:432px;width:15px;height:2.5px;background:#C25B5B;"></div>
<div class="a" style="left:2451px;top:730px;width:15px;height:2.5px;background:#C25B5B;"></div>
<div class="a" style="left:1012px;top:973px;width:1358px;height:13px;background:#E1E1E1;border-bottom:1.500px solid #C9C9C9;box-sizing:border-box;"></div>
<div class="a" style="left:2466px;top:96px;width:45px;height:148px;background:#F2F2F2;"></div>
<div class="a" style="left:2466px;top:98.2px;width:11px;height:3.2px;background:#9AA8DC"></div><div class="a" style="left:2478px;top:98.2px;width:29px;height:3.2px;background:#9C9C9C"></div><div class="a" style="left:2466px;top:110.2px;width:9px;height:3.2px;background:#9AA8DC"></div><div class="a" style="left:2477px;top:110.2px;width:4px;height:3.2px;background:#AEB5AD"></div><div class="a" style="left:2466px;top:122.2px;width:17px;height:3.2px;background:#D4C99C"></div><div class="a" style="left:2483px;top:122.2px;width:7px;height:3.2px;background:#9C9C9C"></div><div class="a" style="left:2492px;top:122.2px;width:1.5px;height:3.2px;background:#9C9C9C"></div><div class="a" style="left:2495px;top:122.2px;width:16px;height:3.2px;background:#98C9A0"></div><div class="a" style="left:2485px;top:125.7px;width:26px;height:6px;background:#D9CDAA"></div><div class="a" style="left:2488px;top:143.7px;width:23px;height:6px;background:#C25B5B"></div><div class="a" style="left:2472px;top:146.2px;width:9px;height:3.2px;background:#9AA8DC"></div><div class="a" style="left:2483px;top:146.2px;width:6px;height:3.2px;background:#9AA8DC"></div><div class="a" style="left:2490px;top:146.2px;width:8px;height:3.2px;background:#7A6163"></div><div class="a" style="left:2504px;top:146.2px;width:7px;height:3.2px;background:#B0447A"></div><div class="a" style="left:2488px;top:155.7px;width:23px;height:6px;background:#C25B5B"></div><div class="a" style="left:2472px;top:158.2px;width:9px;height:3.2px;background:#9AA8DC"></div><div class="a" style="left:2483px;top:158.2px;width:6px;height:3.2px;background:#9AA8DC"></div><div class="a" style="left:2490px;top:158.2px;width:8px;height:3.2px;background:#7A6163"></div><div class="a" style="left:2498px;top:158.2px;width:13px;height:3.2px;background:#7E3F3F"></div><div class="a" style="left:2478px;top:164.7px;width:33px;height:3.2px;background:#9C9C9C"></div><div class="a" style="left:2478px;top:176.2px;width:3px;height:3.2px;background:#CDCDCD"></div><div class="a" style="left:2483px;top:176.2px;width:7px;height:3.2px;background:#CDCDCD"></div><div class="a" style="left:2478px;top:182.2px;width:17px;height:3.2px;background:#9C9C9C"></div><div class="a" style="left:2496px;top:182.2px;width:5px;height:3.2px;background:#9C9C9C"></div><div class="a" style="left:2503px;top:182.2px;width:1.5px;height:3.2px;background:#9C9C9C"></div><div class="a" style="left:2505px;top:182.2px;width:6px;height:3.2px;background:#9C9C9C"></div><div class="a" style="left:2478px;top:188.2px;width:18px;height:3.2px;background:#9C9C9C"></div><div class="a" style="left:2496px;top:188.2px;width:15px;height:3.2px;background:#98C9A0"></div><div class="a" style="left:2478px;top:194.2px;width:18px;height:3.2px;background:#9C9C9C"></div><div class="a" style="left:2496px;top:194.2px;width:9px;height:3.2px;background:#98C9A0"></div><div class="a" style="left:2507px;top:194.2px;width:1px;height:3.2px;background:#9C9C9C"></div><div class="a" style="left:2510px;top:194.2px;width:1px;height:3.2px;background:#C79BD0"></div><div class="a" style="left:2466px;top:197.7px;width:45px;height:6px;background:#A6CAF2"></div><div class="a" style="left:2478px;top:200.2px;width:18px;height:3.2px;background:#6482A8"></div><div class="a" style="left:2496px;top:200.2px;width:15px;height:3.2px;background:#6FAAA0"></div><div class="a" style="left:2472px;top:206.2px;width:1.8px;height:4px;background:#9C9C9C"></div><div class="a" style="left:2488px;top:215.7px;width:23px;height:6px;background:#C25B5B"></div><div class="a" style="left:2472px;top:218.2px;width:9px;height:3.2px;background:#9AA8DC"></div><div class="a" style="left:2483px;top:218.2px;width:6px;height:3.2px;background:#9AA8DC"></div><div class="a" style="left:2490px;top:218.2px;width:12px;height:3.2px;background:#7A6163"></div><div class="a" style="left:2504px;top:218.2px;width:2px;height:3.2px;background:#7A3A3A"></div><div class="a" style="left:2472px;top:224.2px;width:1.8px;height:4px;background:#9C9C9C"></div><div class="a" style="left:2466px;top:230.2px;width:1.8px;height:4px;background:#9C9C9C"></div>
<div class="a" style="left:2469px;top:126.5px;width:42px;height:11px;overflow:hidden;"><div style="font-family:'Liberation Mono',monospace;font-size:11.7px;line-height:11px;height:11px;color:#74DC74;white-space:nowrap;-webkit-text-stroke:0.250px #74DC74;transform:scaleY(1.42);transform-origin:0 0;">HelloServlet</div></div>
<svg class="a" style="left:2524px;top:60px" width="26" height="26" viewBox="0 0 16 16" fill="none" ><path d="M3.200 11.500c.900-1 1.200-1.800 1.200-3.500a3.600 3.600 0 0 1 7.200 0c0 1.700.300 2.500 1.200 3.500z" stroke="#6C707E" stroke-linejoin="round"/><path d="M6.700 13.600h2.600" stroke="#6C707E" stroke-linecap="round"/><circle cx="12.600" cy="3.400" r="2.500" fill="#4682FA"/></svg>
<svg class="a" style="left:2526px;top:110px" width="26" height="26" viewBox="0 0 16 16" fill="none" ><path d="M5.800 8c-.800-.100-1-1.400.300-1.700 1.300-.300 2.300.400 2.500 1.400M10.800 6.300C10.200 4.500 8.400 3.500 6.200 3.500 3.600 3.500 1.800 5.200 1.800 7.300c0 1.900 1.400 3.200 3.400 3.600M12.700 6.200C12 3.600 9.500 2 6.200 2" stroke="#6C707E" stroke-linecap="round"/><path d="M6.300 8.200h7.200v4.300h-.900l.200 2-2.700-2H6.300z" stroke="#6C707E" stroke-linejoin="round" fill="#F7F8FA"/></svg>
<svg class="a" style="left:2524px;top:156px" width="26" height="27" viewBox="0 0 16 16.600" fill="none" ><ellipse cx="8" cy="3.800" rx="5" ry="2" stroke="#6C707E"/><path d="M3 3.800v8.600c0 1.100 2.200 2 5 2s5-.900 5-2V3.800M3 6.700c0 1.100 2.200 2 5 2s5-.900 5-2M3 9.600c0 1.100 2.200 2 5 2s5-.900 5-2" stroke="#6C707E"/></svg>
<div class="t" style="left:2523.5px;top:195.5px;height:40px;line-height:40px;color:#6C707E;font-size:30px;font-style:italic;-webkit-text-stroke:0.3px #6C707E;">m</div>
<svg class="a" style="left:2525px;top:254px" width="24" height="24" viewBox="0 0 16 16" fill="none" ><circle cx="8" cy="8" r="7" fill="#6C707E"/><path d="M0 6.300h5M11 6.300h5M0 9.700h5M11 9.700h5" stroke="#F7F8FA" stroke-width="1.100"/><path d="M5.500 4.300L10.500 11.700M10.500 4.300L5.500 11.700" stroke="#F7F8FA" stroke-width="1.500"/></svg>
<svg class="a" style="left:2523px;top:301px" width="27" height="25" viewBox="0 0 17 15" fill="none" ><path d="M1.500 8.500C4 9 6 7 8 5.200c2-1.700 5.500-1.700 7.300.800 1.300 2 .600 5-1.600 6.400-2.400 1.500-5.300 1.300-7.500.600l1.600-1.500C5.500 11.500 3.500 11.700 1 10.500l3-.800z" fill="#111"/><path d="M8.500 4.300l5.500.900.500 1.500-6-1.200z" fill="#D0222B"/><path d="M7.500 2.600l1.800 1.300M9.800 2.200l.4 1.500" stroke="#D0222B" stroke-width="0.900"/><circle cx="13.200" cy="5.400" r="0.600" fill="#fff"/></svg>
<div class="a" style="left:2518px;top:345px;width:36px;height:1px;background:#D3D5DB;"></div>
<svg class="a" style="left:2524px;top:365px" width="25" height="25" viewBox="0 0 16 16" fill="none" ><path d="M3 2.500h10M2.500 5.500h11v7a1.500 1.500 0 0 1-1.500 1.500H4a1.500 1.500 0 0 1-1.500-1.500z" stroke="#6C707E"/><text x="8" y="12.300" font-size="6.800" text-anchor="middle" fill="#6C707E" font-family="Liberation Sans,sans-serif">A</text></svg>
<div class="t" style="left:68px;top:993.0px;height:40px;line-height:40px;font-weight:bold;font-size:17.8px;">服务</div>
<svg class="a" style="left:63px;top:1045.5px" width="24" height="24" viewBox="0 0 16 16" fill="none" ><path d="M1.300 8h12.400M7.500 1.800v12.400" stroke="#6C707E"/><path d="M16 11.600v4.400h-4.400z" fill="#6C707E"/></svg>
<svg class="a" style="left:101px;top:1045px" width="26" height="24" viewBox="0 0 17.300 16" fill="none" ><path d="M1 8c1.700-3 4-4.500 7-4.500S13.300 5 15 8c-1.700 3-4 4.500-7 4.500S2.700 11 1 8z" stroke="#6C707E"/><circle cx="8" cy="8" r="2.300" stroke="#6C707E"/><path d="M17.300 11.600v4.400h-4.400z" fill="#6C707E"/></svg>
<svg class="a" style="left:141px;top:1044px" width="25" height="25" viewBox="0 0 16 16" fill="none" ><path d="M8 4.500H3.500a1.500 1.500 0 0 0-1.500 1.500v6a1.500 1.500 0 0 0 1.500 1.500h7a1.500 1.500 0 0 0 1.500-1.500V9M12 1.500v5M9.500 4h5" stroke="#6C707E"/></svg>
<div class="a" style="left:178px;top:1043px;width:1px;height:29px;background:#D3D5DB;"></div>
<svg class="a" style="left:191px;top:1045.5px" width="24" height="24" viewBox="0 0 16 16" fill="none" ><path d="M4.300 5.600L8 1.900l3.700 3.700M4.300 10.400L8 14.100l3.700-3.700" stroke="#6C707E"/></svg>
<svg class="a" style="left:230px;top:1045.5px" width="24" height="24" viewBox="0 0 16 16" fill="none" ><path d="M4.300 1.900L8 5.600l3.700-3.700M4.300 14.100L8 10.400l3.700 3.700" stroke="#6C707E"/></svg>
<div class="a" style="left:68px;top:1122px;width:701px;height:33px;background:#DFE1E5;border-radius:6px;"></div>
<svg class="a" style="left:70.5px;top:1096px" width="19" height="19" viewBox="0 0 16 16" fill="none" ><path d="M3.5 5.75L8 10.25 12.5 5.75" stroke="#818594" stroke-width="1.15"/></svg>
<svg class="a" style="left:100px;top:1098px" width="22" height="16.761904761904763" viewBox="0 0 21 16" fill="none" ><path d="M4.600 8.200C2.600 7 2.200 3.600 4.400 3.200c1.300-.200 1.700 1.100.900 1.600" stroke="#777" stroke-width="0.700" fill="none"/><path d="M0.300 14.700c1.600-1.400 2.700-3.300 3.900-5.300C5.600 7 8.600 5.300 12 5.600l6 1.200c-.200 1.900-1.500 3.300-3.200 4l5.600 4.200-5.300-.400-3.400-2.700c-1.300.600-2.900.300-3.900-.700-1.500.700-2.700 2-4.500 3z" fill="#D09A2B" stroke="#5E4A17" stroke-width="0.500" stroke-linejoin="round"/><path d="M12.200 0.700l1.700 1.700h3.200l1.800-1.700.300 4.300c-.100 2.300-2.100 3.400-3.700 3.400s-3.400-1.100-3.500-3.400z" fill="#F2D264" stroke="#4A3D17" stroke-width="0.600" stroke-linejoin="round"/><path d="M14.300 4.300l1.200 1.800 1.200-1.800" stroke="#4A3D17" stroke-width="0.500" fill="none"/><path d="M8.800 11.600l1.800 1.500-2.400.300zM10.800 7.700l1.400.800-1.200.700z" fill="#1E1E1E"/></svg>
<div class="t" style="left:128px;top:1086.0px;height:40px;line-height:40px;letter-spacing:0.582px;">Tomcat 服务器</div>
<svg class="a" style="left:99px;top:1129px" width="19" height="19" viewBox="0 0 16 16" fill="none" ><path d="M3.5 5.75L8 10.25 12.5 5.75" stroke="#818594" stroke-width="1.15"/></svg>
<svg class="a" style="left:128px;top:1131px" width="22" height="16.761904761904763" viewBox="0 0 21 16" fill="none" ><path d="M4.600 8.200C2.600 7 2.200 3.600 4.400 3.200c1.300-.200 1.700 1.100.900 1.600" stroke="#777" stroke-width="0.700" fill="none"/><path d="M0.300 14.700c1.600-1.400 2.700-3.300 3.900-5.300C5.600 7 8.600 5.300 12 5.600l6 1.200c-.200 1.900-1.500 3.300-3.200 4l5.600 4.200-5.300-.400-3.400-2.700c-1.300.600-2.900.300-3.900-.700-1.500.700-2.700 2-4.500 3z" fill="#D09A2B" stroke="#5E4A17" stroke-width="0.500" stroke-linejoin="round"/><path d="M12.200 0.700l1.700 1.700h3.200l1.800-1.700.300 4.300c-.100 2.300-2.100 3.400-3.700 3.400s-3.400-1.100-3.500-3.400z" fill="#F2D264" stroke="#4A3D17" stroke-width="0.600" stroke-linejoin="round"/><path d="M14.300 4.300l1.200 1.800 1.200-1.800" stroke="#4A3D17" stroke-width="0.500" fill="none"/><path d="M8.800 11.600l1.800 1.500-2.400.300zM10.800 7.700l1.400.800-1.200.700z" fill="#1E1E1E"/><path d="M14.800 9.600l7.400 4.400-7.400 4.400z" fill="#59A84B"/></svg>
<div class="t" style="left:156.5px;top:1119.0px;height:40px;line-height:40px;letter-spacing:0.701px;"><b>Tomcat 9.0.105</b></div>
<div class="t" style="left:311.3px;top:1119.0px;height:40px;line-height:40px;color:#818594;letter-spacing:-0.211px;">[本地]</div>
<svg class="a" style="left:157px;top:1159px" width="24" height="25" viewBox="0 0 16 16.600" fill="none" ><path d="M4 4.300l2.800 2.800L4 9.900 1.200 7.100z" stroke="#3574F0" stroke-width="0.900"/><path d="M8.200 0.800l2.300 2.300-2.300 2.300-2.300-2.300z" stroke="#6C707E" stroke-width="0.900"/><path d="M10.500 5.200l2.300 1.600" stroke="#3574F0" stroke-width="0.900"/><path d="M6.800 9.500L5.200 11.500l1.600 2" stroke="#6C707E" stroke-width="0.900"/><circle cx="11.300" cy="11.800" r="3.600" fill="#F7F8FA" stroke="#6C707E" stroke-width="0.900"/><path d="M7.700 11.800h7.200M11.300 8.200v7.200M11.300 8.200c-2 1.600-2 5.600 0 7.200M11.300 8.200c2 1.600 2 5.600 0 7.200" stroke="#6C707E" stroke-width="0.700"/></svg>
<svg class="a" style="left:182px;top:1161px" width="20" height="20" viewBox="0 0 16 16" fill="none" ><path d="M2 8.500l4 4L14.500 3.500" stroke="#4FA45E" stroke-width="2"/></svg>
<div class="t" style="left:209.5px;top:1152.0px;height:40px;line-height:40px;letter-spacing:0.749px;">TomcatDemo:war exploded</div>
<div class="t" style="left:469.5px;top:1152.0px;height:40px;line-height:40px;color:#818594;letter-spacing:-0.229px;">[已同步]</div>
<div class="a" style="left:788px;top:1035px;width:1px;height:455px;background:#EBECF0;"></div>
<svg class="a" style="left:803px;top:1045.5px" width="26" height="26" viewBox="0 0 16 16" fill="none" ><path d="M8.300 13.300A5.600 5.600 0 1 1 12.600 4.800" stroke="#6C707E"/><path d="M13 1.300V5H9.300" stroke="#6C707E"/><path d="M9.800 8.400l5 3.100-5 3.100z" stroke="#3D9A50" stroke-width="1.100" stroke-linejoin="round"/></svg>
<svg class="a" style="left:842px;top:1045.5px" width="26" height="26" viewBox="0 0 16 16" fill="none" ><path d="M8.300 13.300A5.600 5.600 0 1 1 12.600 4.800" stroke="#6C707E"/><path d="M13 1.300V5H9.300" stroke="#6C707E"/><path d="M9.800 11.300a2.200 2.200 0 0 1 4.400 0v1.700a2.200 2.200 0 0 1-4.400 0zM10.600 9.800a1.500 1.500 0 0 1 2.800 0M9.800 11.400l-1.500-.900M14.200 11.400l1.500-.900M9.800 14l-1.500 1M14.200 14l1.500 1" stroke="#3D9A50" stroke-width="1.050"/></svg>
<div class="a" style="left:884px;top:1049px;width:18px;height:18px;background:#FFF7F7;border:1.900px solid #DB3B4B;border-radius:4px;box-sizing:border-box;"></div>
<svg class="a" style="left:920px;top:1046px" width="25" height="25" viewBox="0 0 16 16" fill="none" ><path d="M13.200 8A5.300 5.300 0 1 1 11.300 3.900" stroke="#6C707E"/><path d="M12.400 1v3.700H8.700" stroke="#6C707E"/></svg>
<div class="a" style="left:957px;top:1043px;width:1px;height:29px;background:#D3D5DB;"></div>
<svg class="a" style="left:969px;top:1046px" width="27" height="25" viewBox="0 0 17.300 16" fill="none" ><path d="M1.800 12.500V10.200a6.400 6.400 0 0 1 12.800 0V12.500z" stroke="#6C707E" stroke-linejoin="round"/><circle cx="8" cy="9.300" r="1.500" stroke="#6C707E"/><path d="M9 8.200l2.600-2.800" stroke="#6C707E" stroke-linecap="round"/><path d="M17 11.800v4.200h-4.200z" fill="#6C707E"/></svg>
<div class="a" style="left:1018.5px;top:1049.1px;width:3px;height:3px;background:#6C707E;border-radius:50%;"></div>
<div class="a" style="left:1018.5px;top:1056.5px;width:3px;height:3px;background:#6C707E;border-radius:50%;"></div>
<div class="a" style="left:1018.5px;top:1063.9px;width:3px;height:3px;background:#6C707E;border-radius:50%;"></div>
<div class="t" style="left:1077px;top:1041.0px;height:40px;line-height:40px;font-size:18.600px;letter-spacing:-0.132px;">服务器</div>
<svg class="a" style="left:1166px;top:1046px" width="25" height="25" viewBox="0 0 16 16" fill="none" ><rect x="1.5" y="2.5" width="13" height="11" rx="1.5" fill="#EBECF0" stroke="#6C707E"/><path d="M4 6l2.2 2L4 10M8 10.5h3.5" stroke="#6C707E"/></svg>
<div class="t" style="left:1199px;top:1040.5px;height:40px;line-height:40px;font-size:19.300px;letter-spacing:-0.062px;">Tomcat Localhost 日志</div>
<svg class="a" style="left:1450px;top:1046px" width="25" height="25" viewBox="0 0 16 16" fill="none" ><rect x="1.5" y="2.5" width="13" height="11" rx="1.5" fill="#EBECF0" stroke="#6C707E"/><path d="M4 6l2.2 2L4 10M8 10.5h3.5" stroke="#6C707E"/></svg>
<div class="t" style="left:1483px;top:1040.5px;height:40px;line-height:40px;font-size:19.300px;letter-spacing:-0.104px;">Tomcat Catalina 日志</div>
<div class="a" style="left:789px;top:1081.3px;width:1722px;height:1.7px;background:#EBECF0;"></div>
<div class="a" style="left:1057px;top:1079.5px;width:93px;height:3.5px;background:#A8ADBD;border-radius:1.500px;"></div>
<svg class="a" style="left:793px;top:1096px" width="20" height="20" viewBox="0 0 16 16" fill="none" ><path d="M1.500 8.500l4 4L14.500 3.500" stroke="#4FA45E" stroke-width="2"/></svg>
<div class="t" style="left:821.5px;top:1086.0px;height:40px;line-height:40px;letter-spacing:0.710px;">TomcatDemo:war exploded</div>
<div class="a" style="left:1303px;top:1083px;width:1px;height:407px;background:#EBECF0;"></div>
<div class="a" style="left:1351px;top:1083px;width:2px;height:407px;background:#EDEEF2;"></div>
<svg class="a" style="left:1316px;top:1093px" width="26" height="26" viewBox="0 0 16 16" fill="none" ><path d="M1.500 8h12.500M10.800 4.800L14 8l-3.200 3.200" stroke="#3D9A50"/><path d="M5.500 5.500L8.500 1.500M5.800 1.500h2.700v2.700" stroke="#3D9A50" stroke-width="0.900"/><path d="M5.500 10.500l3 4M5.800 14.500h2.700v-2.700" stroke="#3D9A50" stroke-width="0.900"/></svg>
<svg class="a" style="left:1316px;top:1132px" width="26" height="26" viewBox="0 0 16 16" fill="none" ><path d="M14.500 8H2M5.200 4.800L2 8l3.200 3.200" stroke="#C4C6CC"/><path d="M7.500 5.500l3-4M7.800 1.500h2.700v2.700" stroke="#C4C6CC" stroke-width="0.900"/><path d="M7.500 10.500l3 4M7.800 14.500h2.700v-2.700" stroke="#C4C6CC" stroke-width="0.900"/></svg>
<svg class="a" style="left:1315px;top:1171px" width="27" height="27" viewBox="0 0 16 16" fill="none" ><path d="M12.800 6.600A5 5 0 0 0 3.100 7.600" stroke="#6C707E"/><path d="M1.300 5.700l1.800 2.100 2.100-1.700" stroke="#6C707E"/><path d="M3.300 10A5 5 0 0 0 12.900 8.600" stroke="#6C707E"/><path d="M11 10.300l1.900-2 1.900 2" stroke="#6C707E"/></svg>
<svg class="a" style="left:1316px;top:1211px" width="27" height="27" viewBox="0 0 16 16" fill="none" ><path d="M9 12.500H3A1.500 1.500 0 0 1 1.500 11V4A1.500 1.500 0 0 1 3 2.500h9A1.500 1.500 0 0 1 13.500 4v3.500H9z" stroke="#6C707E" fill="#EBECF0"/><path d="M3.500 5h1M6 5h1" stroke="#6C707E"/><path d="M12.500 9v6M10 12.700l2.500 2.500 2.500-2.500" stroke="#3D9A50"/></svg>
<div class="a" style="left:1353px;top:1083px;width:1109px;height:407px;background:#FFFFFF;overflow:hidden;"></div>
<div class="a" style="left:2462px;top:1083px;width:1px;height:407px;background:#EBECF0;"></div>
<div class="a" style="left:1353px;top:1083px;width:1108px;height:407px;overflow:hidden;"><div class="c" style="left:18.200px;top:-5.8px;height:36px;line-height:36px;color:#7F0000;">30-Oct-2025 20:31:12.483 <span class="cj">信息</span> [main] org.apache.catalina.core.StandardService.startInternal <span class="cj">正在启动服务</span>[Catalina]</div><div class="c" style="left:18.200px;top:30.2px;height:36px;line-height:36px;color:#7F0000;">30-Oct-2025 20:31:12.484 <span class="cj">信息</span> [main] org.apache.catalina.core.StandardEngine.startInternal <span class="cj">正在启动</span> Servlet <span class="cj">引擎：</span>[Apache Tomcat/9.0.105]</div><div class="c" style="left:18.200px;top:66.2px;height:36px;line-height:36px;color:#7F0000;">30-Oct-2025 20:31:12.497 <span class="cj">信息</span> [main] org.apache.coyote.AbstractProtocol.start <span class="cj">开始协议处理句柄</span></div><div class="c" style="left:18.200px;top:102.2px;height:36px;line-height:36px;color:#7F0000;">30-Oct-2025 20:31:12.512 <span class="cj">信息</span> [main] org.apache.catalina.startup.Catalina.start [57]<span class="cj">毫秒后服务器启动</span></div><div class="c" style="left:18.200px;top:138.2px;height:36px;line-height:36px;color:#000000;"><span class="cj">已连接到服务器</span></div><div class="c" style="left:18.200px;top:174.2px;height:36px;line-height:36px;color:#00007F;">[2025-10-30 08:31:12,568] <span class="cj">工件</span> TomcatDemo:war exploded: <span class="cj">正在部署工件，请稍候…</span></div><div class="c" style="left:18.200px;top:210.2px;height:36px;line-height:36px;color:#00007F;">[2025-10-30 08:31:12,861] <span class="cj">工件</span> TomcatDemo:war exploded: <span class="cj">工件已成功部署</span></div><div class="c" style="left:18.200px;top:246.2px;height:36px;line-height:36px;color:#00007F;">[2025-10-30 08:31:12,862] <span class="cj">工件</span> TomcatDemo:war exploded: <span class="cj">部署已花费</span> 293 <span class="cj">毫秒</span></div><div class="c" style="left:18.200px;top:282.2px;height:36px;line-height:36px;color:#7F0000;">30-Oct-2025 20:31:22.503 <span class="cj">信息</span> [Catalina-utility-1] org.apache.catalina.startup.HostConfig.deployDirectory <span class="cj">把</span>web <span class="cj">应用程序部署到目录</span></div><div class="c" style="left:18.200px;top:318.2px;height:36px;line-height:36px;color:#7F0000;">30-Oct-2025 20:31:22.577 <span class="cj">信息</span> [Catalina-utility-1] org.apache.catalina.startup.HostConfig.deployDirectory Web<span class="cj">应用程序目录的部署已完成</span></div></div>
<div class="a" style="left:1371px;top:1476px;width:330px;height:14px;background:#E1E1E1;border-bottom:1.500px solid #C9C9C9;box-sizing:border-box;"></div>
<div class="a" style="left:2446px;top:1350px;width:15px;height:140px;background:#E1E1E1;border-right:1.500px solid #C9C9C9;box-sizing:border-box;"></div>
<svg class="a" style="left:2475px;top:1094px" width="24" height="24" viewBox="0 0 16 16" fill="none" ><path d="M8 14V2.500M3.800 6.500L8 2.300l4.200 4.200" stroke="#6C707E"/></svg>
<svg class="a" style="left:2475px;top:1133px" width="24" height="24" viewBox="0 0 16 16" fill="none" ><path d="M8 2v11.500M3.800 9.500L8 13.700l4.200-4.200" stroke="#6C707E"/></svg>
<svg class="a" style="left:2474px;top:1172px" width="26" height="26" viewBox="0 0 16 16" fill="none" ><path d="M1.500 3.500h13M1.500 7.500h10.300a2.200 2.200 0 0 1 0 4.400H8M1.500 11.500h3.500M9.800 9.700L8 11.800l1.800 2" stroke="#6C707E"/></svg>
<svg class="a" style="left:2474px;top:1210px" width="26" height="26" viewBox="0 0 16 16" fill="none" ><path d="M1.500 4h6M1.500 8h5M1.500 14h13M11 2.500v8M8 7.800l3 3 3-3" stroke="#6C707E"/></svg>
<svg class="a" style="left:2474px;top:1249px" width="26" height="26" viewBox="0 0 16 16" fill="none" ><path d="M4.500 6V2.500h7V6M4.500 11.500H3A1.500 1.500 0 0 1 1.500 10V7.500A1.500 1.500 0 0 1 3 6h10a1.500 1.500 0 0 1 1.500 1.500V10a1.500 1.500 0 0 1-1.500 1.500h-1.500M4.500 9.500h7v4h-7z" stroke="#6C707E"/></svg>
<svg class="a" style="left:2474px;top:1288px" width="26" height="26" viewBox="0 0 16 16" fill="none" ><path d="M2 4.500h12M6 4.500V2.500h4v2M3.500 4.500l.500 8.500a1.500 1.500 0 0 0 1.500 1.500h5a1.500 1.500 0 0 0 1.500-1.500l.500-8.500M6.500 7.500v4M9.500 7.500v4" stroke="#6C707E"/></svg>
<div class="a" style="left:1986px;top:1342px;width:510px;height:134px;background:#27282E;border-radius:11px;box-shadow:0 2px 8px rgba(0,0,0,0.16);"></div>
<svg class="a" style="left:2008px;top:1360px" width="22" height="22" viewBox="0 0 16 16" fill="none" ><circle cx="8" cy="8" r="7.500" fill="#5A5D63"/><path d="M0 6.300h5M11 6.300h5M0 9.700h5M11 9.700h5" stroke="#27282E" stroke-width="1.100"/><path d="M5.300 3.800L10.700 12.200M10.700 3.800L5.300 12.200" stroke="#4FA8E0" stroke-width="1.700"/></svg>
<div class="t" style="left:2043px;top:1353.0px;height:40px;line-height:40px;color:#fff;font-weight:bold;font-size:19.500px;letter-spacing:0.622px;">运行 'Tomcat 9.0.105'</div>
<div class="t" style="left:2043px;top:1385.0px;height:40px;line-height:40px;color:#F0F1F2;font-size:19.500px;letter-spacing:0.575px;">Shortcut 'Shift+F10' missed 23 times</div>
<div class="t" style="left:2043px;top:1422.0px;height:40px;line-height:40px;color:#6B9BFA;font-size:19.500px;letter-spacing:0.506px;">Edit Keybinding</div>
<div class="t" style="left:2210px;top:1422.0px;height:40px;line-height:40px;color:#6B9BFA;font-size:18.600px;letter-spacing:0.348px;">更多</div>
<svg class="a" style="left:2252px;top:1436px" width="16" height="16" viewBox="0 0 16 16" fill="none" ><path d="M3 5.500L8 10.500 13 5.500" stroke="#868A91" stroke-width="1.200"/></svg>
<div class="a" style="left:21px;top:1505px;width:11px;height:11px;border:1.600px solid #3574F0;border-radius:3px;box-sizing:border-box;background:#EDF3FF;"></div>
<div class="t" style="left:39.4px;top:1490.0px;height:40px;line-height:40px;color:#6C707E;font-size:18.500px;letter-spacing:0.762px;">TomcatDemo</div>
<div class="t" style="left:192.2px;top:1490.0px;height:40px;line-height:40px;color:#6C707E;font-size:18.500px;letter-spacing:0.076px;">src</div>
<div class="t" style="left:252.5px;top:1490.0px;height:40px;line-height:40px;color:#6C707E;font-size:18.500px;letter-spacing:0.723px;">main</div>
<div class="t" style="left:332px;top:1490.0px;height:40px;line-height:40px;color:#6C707E;font-size:18.500px;letter-spacing:0.062px;">java</div>
<div class="t" style="left:402px;top:1490.0px;height:40px;line-height:40px;color:#6C707E;font-size:18.500px;letter-spacing:0.816px;">com</div>
<div class="t" style="left:476px;top:1490.0px;height:40px;line-height:40px;color:#6C707E;font-size:18.500px;letter-spacing:0.076px;">src</div>
<div class="t" style="left:536.8px;top:1490.0px;height:40px;line-height:40px;color:#6C707E;font-size:18.500px;letter-spacing:0.920px;">tomcatdemo</div>
<svg class="a" style="left:165.2px;top:1501px" width="17" height="17" viewBox="0 0 16 16" fill="none" ><path d="M6 3.500L10.500 8 6 12.500" stroke="#818594" stroke-width="1.100"/></svg>
<svg class="a" style="left:224.5px;top:1501px" width="17" height="17" viewBox="0 0 16 16" fill="none" ><path d="M6 3.500L10.500 8 6 12.500" stroke="#818594" stroke-width="1.100"/></svg>
<svg class="a" style="left:305.1px;top:1501px" width="17" height="17" viewBox="0 0 16 16" fill="none" ><path d="M6 3.500L10.500 8 6 12.500" stroke="#818594" stroke-width="1.100"/></svg>
<svg class="a" style="left:375.5px;top:1501px" width="17" height="17" viewBox="0 0 16 16" fill="none" ><path d="M6 3.500L10.500 8 6 12.500" stroke="#818594" stroke-width="1.100"/></svg>
<svg class="a" style="left:449.1px;top:1501px" width="17" height="17" viewBox="0 0 16 16" fill="none" ><path d="M6 3.500L10.500 8 6 12.500" stroke="#818594" stroke-width="1.100"/></svg>
<svg class="a" style="left:509.5px;top:1501px" width="17" height="17" viewBox="0 0 16 16" fill="none" ><path d="M6 3.500L10.500 8 6 12.500" stroke="#818594" stroke-width="1.100"/></svg>
<svg class="a" style="left:657.0px;top:1501px" width="17" height="17" viewBox="0 0 16 16" fill="none" ><path d="M6 3.500L10.500 8 6 12.500" stroke="#818594" stroke-width="1.100"/></svg>
<svg class="a" style="left:827.0px;top:1501px" width="17" height="17" viewBox="0 0 16 16" fill="none" ><path d="M6 3.500L10.500 8 6 12.500" stroke="#818594" stroke-width="1.100"/></svg>
<svg class="a" style="left:684.5px;top:1498px" width="23" height="23" viewBox="0 0 16 16" fill="none" ><circle cx="8" cy="8" r="6.5" fill="#E4ECFF" stroke="#3574F0"/><text x="8" y="11.05" font-size="8.6" text-anchor="middle" fill="#3574F0" font-family="Liberation Sans,sans-serif">C</text></svg>
<div class="t" style="left:715px;top:1490.0px;height:40px;line-height:40px;color:#6C707E;font-size:18.500px;letter-spacing:0.229px;">HelloServlet</div>
<svg class="a" style="left:854.5px;top:1498px" width="23" height="23" viewBox="0 0 16 16" fill="none" ><circle cx="8" cy="8" r="6.5" fill="#FFF7F7" stroke="#DB3B4B"/><text x="8" y="10.6" font-size="8.4" text-anchor="middle" fill="#DB3B4B" font-family="Liberation Sans,sans-serif">m</text></svg>
<div class="t" style="left:884.6px;top:1490.0px;height:40px;line-height:40px;color:#6C707E;font-size:18.500px;letter-spacing:0.619px;">doGet</div>
<div class="t" style="left:2145.8px;top:1490.0px;height:40px;line-height:40px;color:#6C707E;font-size:18.500px;letter-spacing:0.281px;">22:39</div>
<div class="a" style="left:2218px;top:1500px;width:10.5px;height:10.5px;background:#F25022;"></div>
<div class="a" style="left:2229.5px;top:1500px;width:10.5px;height:10.5px;background:#7FBA00;"></div>
<div class="a" style="left:2218px;top:1511.5px;width:10.5px;height:10.5px;background:#00A4EF;"></div>
<div class="a" style="left:2229.5px;top:1511.5px;width:10.5px;height:10.5px;background:#FFB900;"></div>
<div class="t" style="left:2266px;top:1490.0px;height:40px;line-height:40px;color:#6C707E;font-size:18.500px;letter-spacing:-1.497px;">LF</div>
<div class="t" style="left:2309.8px;top:1490.0px;height:40px;line-height:40px;color:#6C707E;font-size:18.500px;letter-spacing:-0.104px;">UTF-8</div>
<svg class="a" style="left:2388px;top:1498px" width="23" height="24" viewBox="0 0 16 16.700" fill="none" ><path d="M7 14.500H4A1.500 1.500 0 0 1 2.500 13V5.200L6.200 1.500H10A1.500 1.500 0 0 1 11.500 3v4.500" stroke="#6C707E"/><path d="M6.500 1.800V5.500H2.800" stroke="#6C707E"/><circle cx="11.300" cy="12" r="1.300" stroke="#6C707E" stroke-width="0.900"/><path d="M11.300 8.800v1.200M11.300 14v1.200M8.500 10.400l1 .600M13.100 13l1 .600M8.500 13.600l1-.600M13.100 11l1-.600" stroke="#6C707E" stroke-width="1.300"/></svg>
<div class="t" style="left:2415.5px;top:1490.0px;height:40px;line-height:40px;color:#6C707E;font-size:18.500px;letter-spacing:-0.107px;">4 个空格</div>
<svg class="a" style="left:2513px;top:1498px" width="23" height="23" viewBox="0 0 16 16" fill="none" ><rect x="1.500" y="7" width="10" height="7" rx="1.500" stroke="#6C707E"/><path d="M6.500 9.500v2" stroke="#6C707E"/><path d="M9 7V4.800a2.800 2.800 0 0 1 5.600 0V6" stroke="#6C707E"/></svg>
</body></html>
